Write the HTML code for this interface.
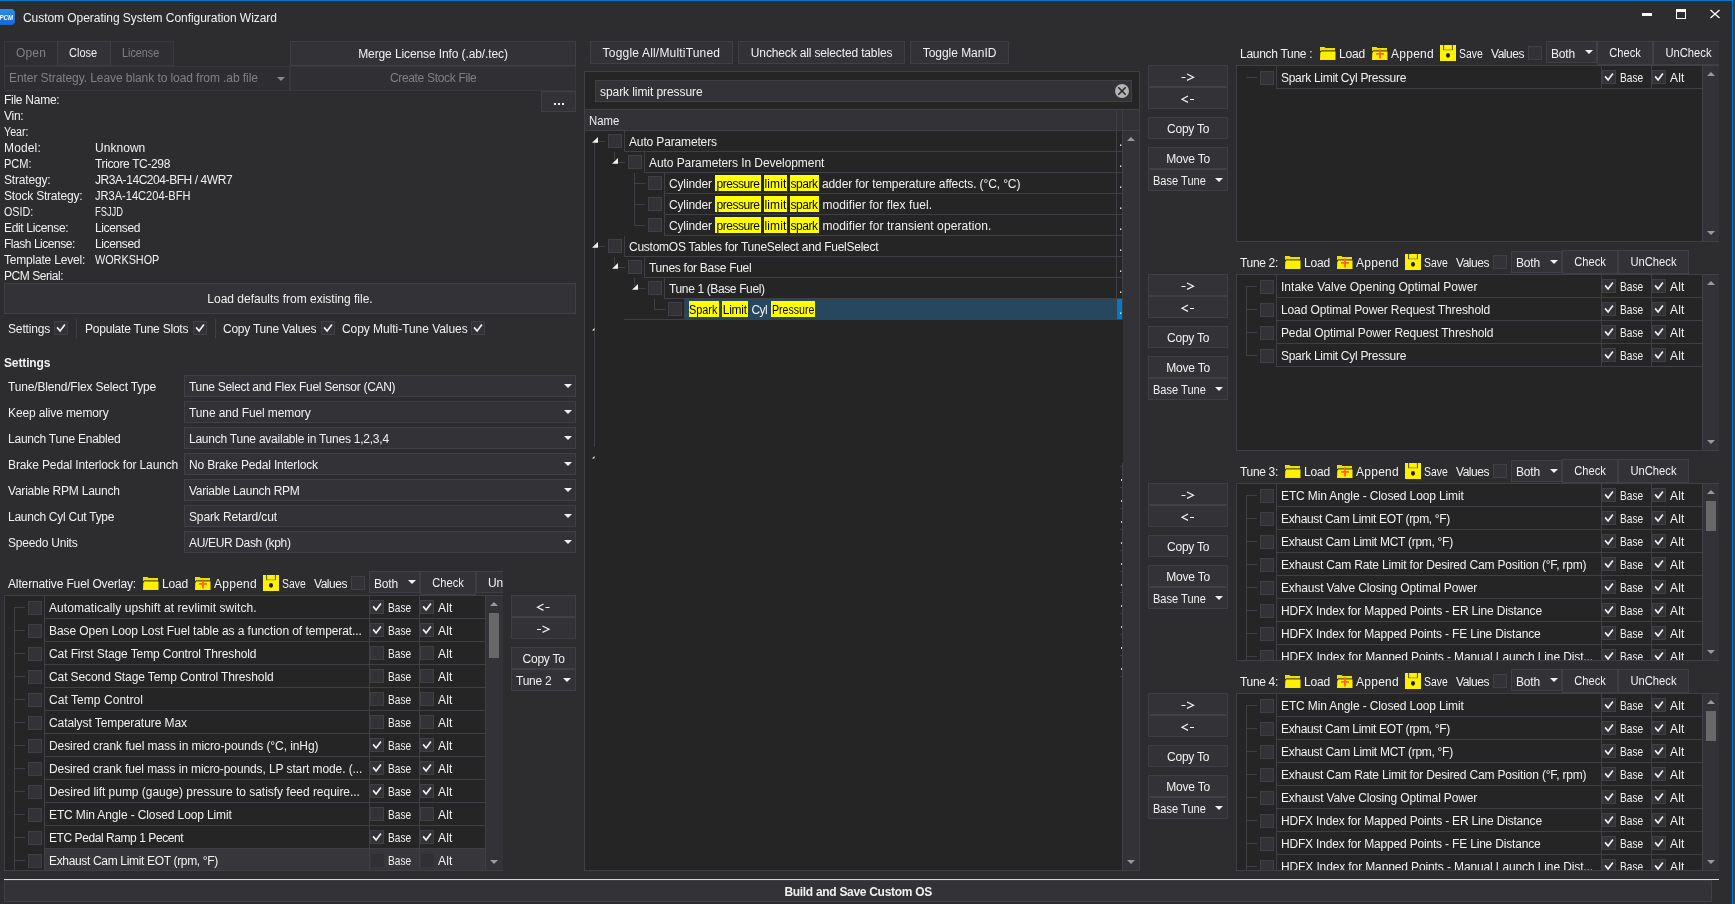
<!DOCTYPE html>
<html><head><meta charset="utf-8"><style>
html,body{margin:0;padding:0;}
body{width:1735px;height:904px;overflow:hidden;position:relative;background:#2D2D30;font-family:"Liberation Sans",sans-serif;font-size:12px;}
.a{position:absolute;}
.t{position:absolute;line-height:14px;white-space:nowrap;letter-spacing:-0.13px;}
svg{display:block;}
</style></head><body><div id="w" style="position:absolute;left:0;top:0;width:1735px;height:904px;will-change:transform">
<div class="a" style="left:0;top:0;width:1733px;height:1px;background:#007ACC"></div>
<div class="a" style="left:1732px;top:0;width:1px;height:904px;background:#007ACC"></div>
<div class="a" style="left:1733px;top:0;width:1px;height:904px;background:#433B38"></div>
<div class="a" style="left:1734px;top:0;width:1px;height:904px;background:#404042"></div>
<svg width="16" height="17" style="position:absolute;left:0;top:9px"><defs><linearGradient id="ig" x1="0" y1="0" x2="0" y2="1"><stop offset="0" stop-color="#2A8DEC"/><stop offset="1" stop-color="#1768D0"/></linearGradient></defs><path d="M-2 0H12.5L15 2.5V13.5L12.5 16H-2Z" fill="url(#ig)"/><text x="-0.5" y="11" font-family="Liberation Sans" font-weight="bold" font-style="italic" font-size="6.5" fill="#fff" textLength="13.5" lengthAdjust="spacingAndGlyphs">PCM</text></svg>
<div class="t" style="left:23px;top:11px;color:#F1F1F1;letter-spacing:-0.033px;letter-spacing:-0.05px">Custom Operating System Configuration Wizard</div>
<div class="a" style="left:1642px;top:13px;width:10px;height:3px;background:#FFFFFF;"></div>
<div class="a" style="left:1676px;top:9px;width:8px;height:6px;border:1px solid #fff;border-top-width:3px"></div>
<svg width="12" height="10" style="position:absolute;left:1709px;top:9px"><path d="M1.5 1L10.5 9M10.5 1L1.5 9" stroke="#fff" stroke-width="1.3"/></svg>
<div class="a" style="left:4px;top:41px;width:170px;height:25px;background:#2F2F33;box-shadow:inset 0 0 0 1px #38383C;"></div>
<div class="a" style="left:57px;top:41px;width:54px;height:25px;background:#333337;box-shadow:inset 0 0 0 1px #3F3F46;"></div>
<div class="t" style="left:16px;top:46px;color:#808080;letter-spacing:0.173px;">Open</div>
<div class="t" style="left:69px;top:46px;color:#F1F1F1;letter-spacing:0px;transform:scaleX(0.9192);transform-origin:0 0;">Close</div>
<div class="t" style="left:122px;top:46px;color:#808080;letter-spacing:0px;transform:scaleX(0.9019);transform-origin:0 0;">License</div>
<div class="a" style="left:4px;top:66px;width:286px;height:25px;background:#2E2E32;box-shadow:inset 0 0 0 1px #38383C;"></div>
<div class="t" style="left:9px;top:71px;color:#808080;letter-spacing:-0.077px;">Enter Strategy. Leave blank to load from .ab file</div>
<svg width="8" height="4" style="position:absolute;left:277px;top:77px"><path d="M0 0H8L4 4Z" fill="#8A8A8A"/></svg>
<div class="a" style="left:290px;top:41px;width:286px;height:25px;background:#333337;box-shadow:inset 0 0 0 1px #3F3F46;"></div>
<div class="t" style="left:290px;width:286px;text-align:center;top:47px;color:#F1F1F1;letter-spacing:-0.105px;text-indent:0.105px;">Merge License Info (.ab/.tec)</div>
<div class="a" style="left:290px;top:66px;width:286px;height:25px;background:#303034;box-shadow:inset 0 0 0 1px #38383C;"></div>
<div class="t" style="left:290px;width:286px;text-align:center;top:71px;color:#808080;letter-spacing:-0.322px;text-indent:0.322px;">Create Stock File</div>
<div class="a" style="left:541px;top:91px;width:35px;height:21px;background:#333337;box-shadow:inset 0 0 0 1px #3F3F46;"></div>
<div class="a" style="left:554px;top:103px;width:2px;height:2px;background:#F1F1F1;"></div>
<div class="a" style="left:558px;top:103px;width:2px;height:2px;background:#F1F1F1;"></div>
<div class="a" style="left:562px;top:103px;width:2px;height:2px;background:#F1F1F1;"></div>
<div class="t" style="left:4px;top:93px;color:#F1F1F1;letter-spacing:-0.264px;">File Name:</div>
<div class="t" style="left:4px;top:109px;color:#F1F1F1;letter-spacing:-0.276px;">Vin:</div>
<div class="t" style="left:4px;top:125px;color:#F1F1F1;letter-spacing:0px;transform:scaleX(0.8882);transform-origin:0 0;">Year:</div>
<div class="t" style="left:4px;top:141px;color:#F1F1F1;letter-spacing:0.143px;">Model:</div>
<div class="t" style="left:95px;top:141px;color:#F1F1F1;letter-spacing:0.041px;">Unknown</div>
<div class="t" style="left:4px;top:157px;color:#F1F1F1;letter-spacing:0px;transform:scaleX(0.9202);transform-origin:0 0;">PCM:</div>
<div class="t" style="left:95px;top:157px;color:#F1F1F1;letter-spacing:-0.359px;">Tricore TC-298</div>
<div class="t" style="left:4px;top:173px;color:#F1F1F1;letter-spacing:-0.186px;">Strategy:</div>
<div class="t" style="left:95px;top:173px;color:#F1F1F1;letter-spacing:-0.435px;">JR3A-14C204-BFH / 4WR7</div>
<div class="t" style="left:4px;top:189px;color:#F1F1F1;letter-spacing:-0.203px;">Stock Strategy:</div>
<div class="t" style="left:95px;top:189px;color:#F1F1F1;letter-spacing:0px;transform:scaleX(0.9230);transform-origin:0 0;">JR3A-14C204-BFH</div>
<div class="t" style="left:4px;top:205px;color:#F1F1F1;letter-spacing:0px;transform:scaleX(0.8968);transform-origin:0 0;">OSID:</div>
<div class="t" style="left:95px;top:205px;color:#F1F1F1;letter-spacing:0px;transform:scaleX(0.7761);transform-origin:0 0;">FSJJD</div>
<div class="t" style="left:4px;top:221px;color:#F1F1F1;letter-spacing:-0.339px;">Edit License:</div>
<div class="t" style="left:95px;top:221px;color:#F1F1F1;letter-spacing:-0.366px;">Licensed</div>
<div class="t" style="left:4px;top:237px;color:#F1F1F1;letter-spacing:-0.465px;">Flash License:</div>
<div class="t" style="left:95px;top:237px;color:#F1F1F1;letter-spacing:-0.366px;">Licensed</div>
<div class="t" style="left:4px;top:253px;color:#F1F1F1;letter-spacing:-0.201px;">Template Level:</div>
<div class="t" style="left:95px;top:253px;color:#F1F1F1;letter-spacing:0px;transform:scaleX(0.9014);transform-origin:0 0;">WORKSHOP</div>
<div class="t" style="left:4px;top:269px;color:#F1F1F1;letter-spacing:-0.438px;">PCM Serial:</div>
<div class="a" style="left:4px;top:283px;width:572px;height:31px;background:#333337;box-shadow:inset 0 0 0 1px #3F3F46;"></div>
<div class="t" style="left:4px;width:572px;text-align:center;top:292px;color:#F1F1F1;letter-spacing:-0.003px;text-indent:0.003px;">Load defaults from existing file.</div>
<div class="t" style="left:8px;top:322px;color:#F1F1F1;letter-spacing:-0.151px;">Settings</div>
<div class="a" style="left:54px;top:321px;width:14px;height:14px;background:#333337;box-shadow:inset 0 0 0 1px #3F3F46;"></div>
<svg width="14" height="14" style="position:absolute;left:54px;top:321px"><path d="M3.1 6.4L6.1 10L10.9 3.6" stroke="#F1F1F1" stroke-width="1.7" fill="none"/></svg>
<div class="a" style="left:76px;top:319px;width:1px;height:19px;background:#3F3F46;"></div>
<div class="t" style="left:85px;top:322px;color:#F1F1F1;letter-spacing:-0.218px;">Populate Tune Slots</div>
<div class="a" style="left:193px;top:321px;width:14px;height:14px;background:#333337;box-shadow:inset 0 0 0 1px #3F3F46;"></div>
<svg width="14" height="14" style="position:absolute;left:193px;top:321px"><path d="M3.1 6.4L6.1 10L10.9 3.6" stroke="#F1F1F1" stroke-width="1.7" fill="none"/></svg>
<div class="a" style="left:215px;top:319px;width:1px;height:19px;background:#3F3F46;"></div>
<div class="t" style="left:223px;top:322px;color:#F1F1F1;letter-spacing:-0.246px;">Copy Tune Values</div>
<div class="a" style="left:321px;top:321px;width:14px;height:14px;background:#333337;box-shadow:inset 0 0 0 1px #3F3F46;"></div>
<svg width="14" height="14" style="position:absolute;left:321px;top:321px"><path d="M3.1 6.4L6.1 10L10.9 3.6" stroke="#F1F1F1" stroke-width="1.7" fill="none"/></svg>
<div class="t" style="left:342px;top:322px;color:#F1F1F1;letter-spacing:-0.049px;">Copy Multi-Tune Values</div>
<div class="a" style="left:471px;top:321px;width:14px;height:14px;background:#333337;box-shadow:inset 0 0 0 1px #3F3F46;"></div>
<svg width="14" height="14" style="position:absolute;left:471px;top:321px"><path d="M3.1 6.4L6.1 10L10.9 3.6" stroke="#F1F1F1" stroke-width="1.7" fill="none"/></svg>
<div class="t" style="left:4px;top:356px;font-weight:bold;color:#F1F1F1">Settings</div>
<div class="t" style="left:8px;top:380px;color:#F1F1F1;letter-spacing:-0.173px;">Tune/Blend/Flex Select Type</div>
<div class="a" style="left:184px;top:375px;width:392px;height:22px;background:#333337;box-shadow:inset 0 0 0 1px #3F3F46;"></div>
<div class="t" style="left:189px;top:380px;color:#F1F1F1;letter-spacing:-0.299px;">Tune Select and Flex Fuel Sensor (CAN)</div>
<svg width="8" height="4" style="position:absolute;left:564px;top:384px"><path d="M0 0H8L4 4Z" fill="#F1F1F1"/></svg>
<div class="t" style="left:8px;top:406px;color:#F1F1F1;letter-spacing:-0.126px;">Keep alive memory</div>
<div class="a" style="left:184px;top:401px;width:392px;height:22px;background:#333337;box-shadow:inset 0 0 0 1px #3F3F46;"></div>
<div class="t" style="left:189px;top:406px;color:#F1F1F1;letter-spacing:-0.1px;">Tune and Fuel memory</div>
<svg width="8" height="4" style="position:absolute;left:564px;top:410px"><path d="M0 0H8L4 4Z" fill="#F1F1F1"/></svg>
<div class="t" style="left:8px;top:432px;color:#F1F1F1;letter-spacing:-0.234px;">Launch Tune Enabled</div>
<div class="a" style="left:184px;top:427px;width:392px;height:22px;background:#333337;box-shadow:inset 0 0 0 1px #3F3F46;"></div>
<div class="t" style="left:189px;top:432px;color:#F1F1F1;letter-spacing:-0.237px;">Launch Tune available in Tunes 1,2,3,4</div>
<svg width="8" height="4" style="position:absolute;left:564px;top:436px"><path d="M0 0H8L4 4Z" fill="#F1F1F1"/></svg>
<div class="t" style="left:8px;top:458px;color:#F1F1F1;letter-spacing:-0.123px;">Brake Pedal Interlock for Launch</div>
<div class="a" style="left:184px;top:453px;width:392px;height:22px;background:#333337;box-shadow:inset 0 0 0 1px #3F3F46;"></div>
<div class="t" style="left:189px;top:458px;color:#F1F1F1;letter-spacing:-0.162px;">No Brake Pedal Interlock</div>
<svg width="8" height="4" style="position:absolute;left:564px;top:462px"><path d="M0 0H8L4 4Z" fill="#F1F1F1"/></svg>
<div class="t" style="left:8px;top:484px;color:#F1F1F1;letter-spacing:-0.215px;">Variable RPM Launch</div>
<div class="a" style="left:184px;top:479px;width:392px;height:22px;background:#333337;box-shadow:inset 0 0 0 1px #3F3F46;"></div>
<div class="t" style="left:189px;top:484px;color:#F1F1F1;letter-spacing:-0.28px;">Variable Launch RPM</div>
<svg width="8" height="4" style="position:absolute;left:564px;top:488px"><path d="M0 0H8L4 4Z" fill="#F1F1F1"/></svg>
<div class="t" style="left:8px;top:510px;color:#F1F1F1;letter-spacing:-0.262px;">Launch Cyl Cut Type</div>
<div class="a" style="left:184px;top:505px;width:392px;height:22px;background:#333337;box-shadow:inset 0 0 0 1px #3F3F46;"></div>
<div class="t" style="left:189px;top:510px;color:#F1F1F1;letter-spacing:-0.134px;">Spark Retard/cut</div>
<svg width="8" height="4" style="position:absolute;left:564px;top:514px"><path d="M0 0H8L4 4Z" fill="#F1F1F1"/></svg>
<div class="t" style="left:8px;top:536px;color:#F1F1F1;letter-spacing:-0.213px;">Speedo Units</div>
<div class="a" style="left:184px;top:531px;width:392px;height:22px;background:#333337;box-shadow:inset 0 0 0 1px #3F3F46;"></div>
<div class="t" style="left:189px;top:536px;color:#F1F1F1;letter-spacing:-0.342px;">AU/EUR Dash (kph)</div>
<svg width="8" height="4" style="position:absolute;left:564px;top:540px"><path d="M0 0H8L4 4Z" fill="#F1F1F1"/></svg>
<div class="t" style="left:8px;top:577px;color:#F1F1F1;letter-spacing:-0.135px;">Alternative Fuel Overlay:</div>
<svg width="16" height="14" style="position:absolute;left:143px;top:577px"><path d="M0 0H4.5L5.5 1H15V4H0Z" fill="#F0E000"/><path d="M0.5 3H15V4.6H1.2Z" fill="#7A7418"/><path d="M1.2 4.5H15.5V13H0L0.3 6Z" fill="#FFF000"/><path d="M1 12.4H15" stroke="#E8E040" stroke-width="0.8"/></svg>
<div class="t" style="left:162px;top:577px;color:#F1F1F1;letter-spacing:-0.207px;">Load</div>
<svg width="16" height="14" style="position:absolute;left:195px;top:577px"><path d="M0 0H4.5L5.5 1H15V4H0Z" fill="#F0E000"/><path d="M0.5 3H15V4.6H1.2Z" fill="#7A7418"/><path d="M1.2 4.5H15.5V13H0L0.3 6Z" fill="#FFF000"/><path d="M1 12.4H15" stroke="#E8E040" stroke-width="0.8"/><path d="M8 2.5V11.5M4 6.9H12" stroke="#FF6420" stroke-width="1.8"/></svg>
<div class="t" style="left:214px;top:577px;color:#F1F1F1;letter-spacing:0.26px;">Append</div>
<svg width="16" height="16" style="position:absolute;left:263px;top:575px"><rect x="0" y="0" width="16" height="16" fill="#FFF200"/><path d="M3.6 0V5.2M12.4 0V5.2" stroke="#3C4020" stroke-width="0.9"/><rect x="4" y="4.2" width="8" height="1.3" fill="#B8B030"/><ellipse cx="8" cy="10.3" rx="2" ry="2.4" fill="#1E1E22"/></svg>
<div class="t" style="left:282px;top:577px;color:#F1F1F1;letter-spacing:0px;transform:scaleX(0.8671);transform-origin:0 0;">Save</div>
<div class="t" style="left:314px;top:577px;color:#F1F1F1;letter-spacing:-0.48px;">Values</div>
<div class="a" style="left:351px;top:576px;width:14px;height:14px;background:#333337;box-shadow:inset 0 0 0 1px #3F3F46;"></div>
<div class="a" style="left:369px;top:571px;width:51px;height:22px;background:#333337;box-shadow:inset 0 0 0 1px #3F3F46;"></div>
<div class="t" style="left:374px;top:577px;color:#F1F1F1;letter-spacing:-0.171px;">Both</div>
<svg width="8" height="4" style="position:absolute;left:408px;top:580px"><path d="M0 0H8L4 4Z" fill="#F1F1F1"/></svg>
<div class="a" style="left:420px;top:571px;width:56px;height:24px;background:#333337;box-shadow:inset 0 0 0 1px #3F3F46;"></div>
<div class="t" style="left:420px;width:56px;text-align:center;top:576px;color:#F1F1F1;letter-spacing:0px;text-indent:0px;transform:scaleX(0.9254);transform-origin:50% 0;">Check</div>
<div class="a" style="left:476px;top:571px;width:27px;height:24px;overflow:hidden">
<div class="a" style="left:0;top:0;width:70px;height:22px;background:#333337;box-shadow:inset 0 0 0 1px #3F3F46"></div>
<div class="t" style="left:12px;top:5px;color:#F1F1F1">UnCheck</div>
</div>
<div class="a" style="left:4px;top:595px;width:499px;height:276px;background:#252526;box-shadow:inset 0 0 0 1px #3F3F46;"></div>
<div class="a" style="left:5px;top:596px;width:480px;height:274px;overflow:hidden">
<div class="a" style="left:9px;top:11px;width:11px;height:1px;background:#3F3F46"></div>
<div class="a" style="left:23px;top:5px;width:14px;height:14px;background:#333337;box-shadow:inset 0 0 0 1px #3F3F46"></div>
<div class="a" style="left:39px;top:0px;width:1px;height:23px;background:#3F3F46"></div>
<div class="a" style="left:39px;top:22px;width:441px;height:1px;background:#3F3F46"></div>
<div class="t" style="left:44px;top:5px;color:#F1F1F1;width:317px;white-space:nowrap;overflow:hidden;letter-spacing:0.073px">Automatically upshift at revlimit switch.</div>
<div class="a" style="left:364px;top:0px;width:1px;height:23px;background:#3F3F46"></div>
<div class="a" style="left:365px;top:4px;width:14px;height:14px;background:#333337;box-shadow:inset 0 0 0 1px #3F3F46"></div>
<svg width="14" height="14" style="position:absolute;left:365px;top:4px"><path d="M3.1 6.4L6.1 10L10.9 3.6" stroke="#F1F1F1" stroke-width="1.7" fill="none"/></svg>
<div class="t" style="left:383px;top:5px;color:#F1F1F1;letter-spacing:0px;transform:scaleX(0.8454);transform-origin:0 0;">Base</div>
<div class="a" style="left:414px;top:0px;width:1px;height:23px;background:#3F3F46"></div>
<div class="a" style="left:415px;top:4px;width:14px;height:14px;background:#333337;box-shadow:inset 0 0 0 1px #3F3F46"></div>
<svg width="14" height="14" style="position:absolute;left:415px;top:4px"><path d="M3.1 6.4L6.1 10L10.9 3.6" stroke="#F1F1F1" stroke-width="1.7" fill="none"/></svg>
<div class="t" style="left:433px;top:5px;color:#F1F1F1;letter-spacing:0.165px">Alt</div>
<div class="a" style="left:9px;top:34px;width:11px;height:1px;background:#3F3F46"></div>
<div class="a" style="left:23px;top:28px;width:14px;height:14px;background:#333337;box-shadow:inset 0 0 0 1px #3F3F46"></div>
<div class="a" style="left:39px;top:23px;width:1px;height:23px;background:#3F3F46"></div>
<div class="a" style="left:39px;top:45px;width:441px;height:1px;background:#3F3F46"></div>
<div class="t" style="left:44px;top:28px;color:#F1F1F1;width:317px;white-space:nowrap;overflow:hidden;letter-spacing:-0.079px">Base Open Loop Lost Fuel table as a function of temperat...</div>
<div class="a" style="left:364px;top:23px;width:1px;height:23px;background:#3F3F46"></div>
<div class="a" style="left:365px;top:27px;width:14px;height:14px;background:#333337;box-shadow:inset 0 0 0 1px #3F3F46"></div>
<svg width="14" height="14" style="position:absolute;left:365px;top:27px"><path d="M3.1 6.4L6.1 10L10.9 3.6" stroke="#F1F1F1" stroke-width="1.7" fill="none"/></svg>
<div class="t" style="left:383px;top:28px;color:#F1F1F1;letter-spacing:0px;transform:scaleX(0.8454);transform-origin:0 0;">Base</div>
<div class="a" style="left:414px;top:23px;width:1px;height:23px;background:#3F3F46"></div>
<div class="a" style="left:415px;top:27px;width:14px;height:14px;background:#333337;box-shadow:inset 0 0 0 1px #3F3F46"></div>
<svg width="14" height="14" style="position:absolute;left:415px;top:27px"><path d="M3.1 6.4L6.1 10L10.9 3.6" stroke="#F1F1F1" stroke-width="1.7" fill="none"/></svg>
<div class="t" style="left:433px;top:28px;color:#F1F1F1;letter-spacing:0.165px">Alt</div>
<div class="a" style="left:9px;top:57px;width:11px;height:1px;background:#3F3F46"></div>
<div class="a" style="left:23px;top:51px;width:14px;height:14px;background:#333337;box-shadow:inset 0 0 0 1px #3F3F46"></div>
<div class="a" style="left:39px;top:46px;width:1px;height:23px;background:#3F3F46"></div>
<div class="a" style="left:39px;top:68px;width:441px;height:1px;background:#3F3F46"></div>
<div class="t" style="left:44px;top:51px;color:#F1F1F1;width:317px;white-space:nowrap;overflow:hidden;letter-spacing:-0.093px">Cat First Stage Temp Control Threshold</div>
<div class="a" style="left:364px;top:46px;width:1px;height:23px;background:#3F3F46"></div>
<div class="a" style="left:365px;top:50px;width:14px;height:14px;background:#333337;box-shadow:inset 0 0 0 1px #3F3F46"></div>
<div class="t" style="left:383px;top:51px;color:#F1F1F1;letter-spacing:0px;transform:scaleX(0.8454);transform-origin:0 0;">Base</div>
<div class="a" style="left:414px;top:46px;width:1px;height:23px;background:#3F3F46"></div>
<div class="a" style="left:415px;top:50px;width:14px;height:14px;background:#333337;box-shadow:inset 0 0 0 1px #3F3F46"></div>
<div class="t" style="left:433px;top:51px;color:#F1F1F1;letter-spacing:0.165px">Alt</div>
<div class="a" style="left:9px;top:80px;width:11px;height:1px;background:#3F3F46"></div>
<div class="a" style="left:23px;top:74px;width:14px;height:14px;background:#333337;box-shadow:inset 0 0 0 1px #3F3F46"></div>
<div class="a" style="left:39px;top:69px;width:1px;height:23px;background:#3F3F46"></div>
<div class="a" style="left:39px;top:91px;width:441px;height:1px;background:#3F3F46"></div>
<div class="t" style="left:44px;top:74px;color:#F1F1F1;width:317px;white-space:nowrap;overflow:hidden;letter-spacing:-0.098px">Cat Second Stage Temp Control Threshold</div>
<div class="a" style="left:364px;top:69px;width:1px;height:23px;background:#3F3F46"></div>
<div class="a" style="left:365px;top:73px;width:14px;height:14px;background:#333337;box-shadow:inset 0 0 0 1px #3F3F46"></div>
<div class="t" style="left:383px;top:74px;color:#F1F1F1;letter-spacing:0px;transform:scaleX(0.8454);transform-origin:0 0;">Base</div>
<div class="a" style="left:414px;top:69px;width:1px;height:23px;background:#3F3F46"></div>
<div class="a" style="left:415px;top:73px;width:14px;height:14px;background:#333337;box-shadow:inset 0 0 0 1px #3F3F46"></div>
<div class="t" style="left:433px;top:74px;color:#F1F1F1;letter-spacing:0.165px">Alt</div>
<div class="a" style="left:9px;top:103px;width:11px;height:1px;background:#3F3F46"></div>
<div class="a" style="left:23px;top:97px;width:14px;height:14px;background:#333337;box-shadow:inset 0 0 0 1px #3F3F46"></div>
<div class="a" style="left:39px;top:92px;width:1px;height:23px;background:#3F3F46"></div>
<div class="a" style="left:39px;top:114px;width:441px;height:1px;background:#3F3F46"></div>
<div class="t" style="left:44px;top:97px;color:#F1F1F1;width:317px;white-space:nowrap;overflow:hidden;letter-spacing:0.053px">Cat Temp Control</div>
<div class="a" style="left:364px;top:92px;width:1px;height:23px;background:#3F3F46"></div>
<div class="a" style="left:365px;top:96px;width:14px;height:14px;background:#333337;box-shadow:inset 0 0 0 1px #3F3F46"></div>
<div class="t" style="left:383px;top:97px;color:#F1F1F1;letter-spacing:0px;transform:scaleX(0.8454);transform-origin:0 0;">Base</div>
<div class="a" style="left:414px;top:92px;width:1px;height:23px;background:#3F3F46"></div>
<div class="a" style="left:415px;top:96px;width:14px;height:14px;background:#333337;box-shadow:inset 0 0 0 1px #3F3F46"></div>
<div class="t" style="left:433px;top:97px;color:#F1F1F1;letter-spacing:0.165px">Alt</div>
<div class="a" style="left:9px;top:126px;width:11px;height:1px;background:#3F3F46"></div>
<div class="a" style="left:23px;top:120px;width:14px;height:14px;background:#333337;box-shadow:inset 0 0 0 1px #3F3F46"></div>
<div class="a" style="left:39px;top:115px;width:1px;height:23px;background:#3F3F46"></div>
<div class="a" style="left:39px;top:137px;width:441px;height:1px;background:#3F3F46"></div>
<div class="t" style="left:44px;top:120px;color:#F1F1F1;width:317px;white-space:nowrap;overflow:hidden;letter-spacing:-0.08px">Catalyst Temperature Max</div>
<div class="a" style="left:364px;top:115px;width:1px;height:23px;background:#3F3F46"></div>
<div class="a" style="left:365px;top:119px;width:14px;height:14px;background:#333337;box-shadow:inset 0 0 0 1px #3F3F46"></div>
<div class="t" style="left:383px;top:120px;color:#F1F1F1;letter-spacing:0px;transform:scaleX(0.8454);transform-origin:0 0;">Base</div>
<div class="a" style="left:414px;top:115px;width:1px;height:23px;background:#3F3F46"></div>
<div class="a" style="left:415px;top:119px;width:14px;height:14px;background:#333337;box-shadow:inset 0 0 0 1px #3F3F46"></div>
<div class="t" style="left:433px;top:120px;color:#F1F1F1;letter-spacing:0.165px">Alt</div>
<div class="a" style="left:9px;top:149px;width:11px;height:1px;background:#3F3F46"></div>
<div class="a" style="left:23px;top:143px;width:14px;height:14px;background:#333337;box-shadow:inset 0 0 0 1px #3F3F46"></div>
<div class="a" style="left:39px;top:138px;width:1px;height:23px;background:#3F3F46"></div>
<div class="a" style="left:39px;top:160px;width:441px;height:1px;background:#3F3F46"></div>
<div class="t" style="left:44px;top:143px;color:#F1F1F1;width:317px;white-space:nowrap;overflow:hidden;letter-spacing:-0.083px">Desired crank fuel mass in micro-pounds (°C, inHg)</div>
<div class="a" style="left:364px;top:138px;width:1px;height:23px;background:#3F3F46"></div>
<div class="a" style="left:365px;top:142px;width:14px;height:14px;background:#333337;box-shadow:inset 0 0 0 1px #3F3F46"></div>
<svg width="14" height="14" style="position:absolute;left:365px;top:142px"><path d="M3.1 6.4L6.1 10L10.9 3.6" stroke="#F1F1F1" stroke-width="1.7" fill="none"/></svg>
<div class="t" style="left:383px;top:143px;color:#F1F1F1;letter-spacing:0px;transform:scaleX(0.8454);transform-origin:0 0;">Base</div>
<div class="a" style="left:414px;top:138px;width:1px;height:23px;background:#3F3F46"></div>
<div class="a" style="left:415px;top:142px;width:14px;height:14px;background:#333337;box-shadow:inset 0 0 0 1px #3F3F46"></div>
<svg width="14" height="14" style="position:absolute;left:415px;top:142px"><path d="M3.1 6.4L6.1 10L10.9 3.6" stroke="#F1F1F1" stroke-width="1.7" fill="none"/></svg>
<div class="t" style="left:433px;top:143px;color:#F1F1F1;letter-spacing:0.165px">Alt</div>
<div class="a" style="left:9px;top:172px;width:11px;height:1px;background:#3F3F46"></div>
<div class="a" style="left:23px;top:166px;width:14px;height:14px;background:#333337;box-shadow:inset 0 0 0 1px #3F3F46"></div>
<div class="a" style="left:39px;top:161px;width:1px;height:23px;background:#3F3F46"></div>
<div class="a" style="left:39px;top:183px;width:441px;height:1px;background:#3F3F46"></div>
<div class="t" style="left:44px;top:166px;color:#F1F1F1;width:317px;white-space:nowrap;overflow:hidden;letter-spacing:-0.1px">Desired crank fuel mass in micro-pounds, LP start mode. (...</div>
<div class="a" style="left:364px;top:161px;width:1px;height:23px;background:#3F3F46"></div>
<div class="a" style="left:365px;top:165px;width:14px;height:14px;background:#333337;box-shadow:inset 0 0 0 1px #3F3F46"></div>
<svg width="14" height="14" style="position:absolute;left:365px;top:165px"><path d="M3.1 6.4L6.1 10L10.9 3.6" stroke="#F1F1F1" stroke-width="1.7" fill="none"/></svg>
<div class="t" style="left:383px;top:166px;color:#F1F1F1;letter-spacing:0px;transform:scaleX(0.8454);transform-origin:0 0;">Base</div>
<div class="a" style="left:414px;top:161px;width:1px;height:23px;background:#3F3F46"></div>
<div class="a" style="left:415px;top:165px;width:14px;height:14px;background:#333337;box-shadow:inset 0 0 0 1px #3F3F46"></div>
<svg width="14" height="14" style="position:absolute;left:415px;top:165px"><path d="M3.1 6.4L6.1 10L10.9 3.6" stroke="#F1F1F1" stroke-width="1.7" fill="none"/></svg>
<div class="t" style="left:433px;top:166px;color:#F1F1F1;letter-spacing:0.165px">Alt</div>
<div class="a" style="left:9px;top:195px;width:11px;height:1px;background:#3F3F46"></div>
<div class="a" style="left:23px;top:189px;width:14px;height:14px;background:#333337;box-shadow:inset 0 0 0 1px #3F3F46"></div>
<div class="a" style="left:39px;top:184px;width:1px;height:23px;background:#3F3F46"></div>
<div class="a" style="left:39px;top:206px;width:441px;height:1px;background:#3F3F46"></div>
<div class="t" style="left:44px;top:189px;color:#F1F1F1;width:317px;white-space:nowrap;overflow:hidden;letter-spacing:-0.031px">Desired lift pump (gauge) pressure to satisfy feed require...</div>
<div class="a" style="left:364px;top:184px;width:1px;height:23px;background:#3F3F46"></div>
<div class="a" style="left:365px;top:188px;width:14px;height:14px;background:#333337;box-shadow:inset 0 0 0 1px #3F3F46"></div>
<svg width="14" height="14" style="position:absolute;left:365px;top:188px"><path d="M3.1 6.4L6.1 10L10.9 3.6" stroke="#F1F1F1" stroke-width="1.7" fill="none"/></svg>
<div class="t" style="left:383px;top:189px;color:#F1F1F1;letter-spacing:0px;transform:scaleX(0.8454);transform-origin:0 0;">Base</div>
<div class="a" style="left:414px;top:184px;width:1px;height:23px;background:#3F3F46"></div>
<div class="a" style="left:415px;top:188px;width:14px;height:14px;background:#333337;box-shadow:inset 0 0 0 1px #3F3F46"></div>
<svg width="14" height="14" style="position:absolute;left:415px;top:188px"><path d="M3.1 6.4L6.1 10L10.9 3.6" stroke="#F1F1F1" stroke-width="1.7" fill="none"/></svg>
<div class="t" style="left:433px;top:189px;color:#F1F1F1;letter-spacing:0.165px">Alt</div>
<div class="a" style="left:9px;top:218px;width:11px;height:1px;background:#3F3F46"></div>
<div class="a" style="left:23px;top:212px;width:14px;height:14px;background:#333337;box-shadow:inset 0 0 0 1px #3F3F46"></div>
<div class="a" style="left:39px;top:207px;width:1px;height:23px;background:#3F3F46"></div>
<div class="a" style="left:39px;top:229px;width:441px;height:1px;background:#3F3F46"></div>
<div class="t" style="left:44px;top:212px;color:#F1F1F1;width:317px;white-space:nowrap;overflow:hidden;letter-spacing:-0.121px">ETC Min Angle - Closed Loop Limit</div>
<div class="a" style="left:364px;top:207px;width:1px;height:23px;background:#3F3F46"></div>
<div class="a" style="left:365px;top:211px;width:14px;height:14px;background:#333337;box-shadow:inset 0 0 0 1px #3F3F46"></div>
<div class="t" style="left:383px;top:212px;color:#F1F1F1;letter-spacing:0px;transform:scaleX(0.8454);transform-origin:0 0;">Base</div>
<div class="a" style="left:414px;top:207px;width:1px;height:23px;background:#3F3F46"></div>
<div class="a" style="left:415px;top:211px;width:14px;height:14px;background:#333337;box-shadow:inset 0 0 0 1px #3F3F46"></div>
<div class="t" style="left:433px;top:212px;color:#F1F1F1;letter-spacing:0.165px">Alt</div>
<div class="a" style="left:9px;top:241px;width:11px;height:1px;background:#3F3F46"></div>
<div class="a" style="left:23px;top:235px;width:14px;height:14px;background:#333337;box-shadow:inset 0 0 0 1px #3F3F46"></div>
<div class="a" style="left:39px;top:230px;width:1px;height:23px;background:#3F3F46"></div>
<div class="a" style="left:39px;top:252px;width:441px;height:1px;background:#3F3F46"></div>
<div class="t" style="left:44px;top:235px;color:#F1F1F1;width:317px;white-space:nowrap;overflow:hidden;letter-spacing:-0.433px">ETC Pedal Ramp 1 Pecent</div>
<div class="a" style="left:364px;top:230px;width:1px;height:23px;background:#3F3F46"></div>
<div class="a" style="left:365px;top:234px;width:14px;height:14px;background:#333337;box-shadow:inset 0 0 0 1px #3F3F46"></div>
<svg width="14" height="14" style="position:absolute;left:365px;top:234px"><path d="M3.1 6.4L6.1 10L10.9 3.6" stroke="#F1F1F1" stroke-width="1.7" fill="none"/></svg>
<div class="t" style="left:383px;top:235px;color:#F1F1F1;letter-spacing:0px;transform:scaleX(0.8454);transform-origin:0 0;">Base</div>
<div class="a" style="left:414px;top:230px;width:1px;height:23px;background:#3F3F46"></div>
<div class="a" style="left:415px;top:234px;width:14px;height:14px;background:#333337;box-shadow:inset 0 0 0 1px #3F3F46"></div>
<svg width="14" height="14" style="position:absolute;left:415px;top:234px"><path d="M3.1 6.4L6.1 10L10.9 3.6" stroke="#F1F1F1" stroke-width="1.7" fill="none"/></svg>
<div class="t" style="left:433px;top:235px;color:#F1F1F1;letter-spacing:0.165px">Alt</div>
<div class="a" style="left:39px;top:253px;width:441px;height:22px;background:#37373B"></div>
<div class="a" style="left:9px;top:264px;width:11px;height:1px;background:#3F3F46"></div>
<div class="a" style="left:23px;top:258px;width:14px;height:14px;background:#333337;box-shadow:inset 0 0 0 1px #3F3F46"></div>
<div class="a" style="left:39px;top:253px;width:1px;height:23px;background:#3F3F46"></div>
<div class="a" style="left:39px;top:275px;width:441px;height:1px;background:#3F3F46"></div>
<div class="t" style="left:44px;top:258px;color:#F1F1F1;width:317px;white-space:nowrap;overflow:hidden;letter-spacing:-0.333px">Exhaust Cam Limit EOT (rpm, °F)</div>
<div class="a" style="left:364px;top:253px;width:1px;height:23px;background:#3F3F46"></div>
<div class="a" style="left:366px;top:258px;width:13px;height:13px;background:#313135"></div>
<div class="t" style="left:383px;top:258px;color:#F1F1F1;letter-spacing:0px;transform:scaleX(0.8454);transform-origin:0 0;">Base</div>
<div class="a" style="left:414px;top:253px;width:1px;height:23px;background:#3F3F46"></div>
<div class="a" style="left:416px;top:258px;width:13px;height:13px;background:#313135"></div>
<div class="t" style="left:433px;top:258px;color:#F1F1F1;letter-spacing:0.165px">Alt</div>
<div class="a" style="left:9px;top:11px;width:1px;height:263px;background:#3F3F46"></div>
</div>
<div class="a" style="left:486px;top:596px;width:17px;height:274px;background:#333337;"></div>
<div class="a" style="left:485px;top:596px;width:1px;height:274px;background:#3F3F46;"></div>
<svg width="8" height="4" style="position:absolute;left:490px;top:602px"><path d="M0 4H8L4 0Z" fill="#9A9A9A"/></svg>
<svg width="8" height="4" style="position:absolute;left:490px;top:860px"><path d="M0 0H8L4 4Z" fill="#9A9A9A"/></svg>
<div class="a" style="left:489px;top:613px;width:10px;height:45px;background:#686868;"></div>
<div class="a" style="left:511px;top:595px;width:65px;height:22px;background:#333337;box-shadow:inset 0 0 0 1px #3F3F46;"></div>
<svg width="20" height="16" style="position:absolute;left:533px;top:599px"><path d="M10.5 5L4.5 8.200000000000045L10.5 11.399999999999977M12.5 8.5H16.5" stroke="#F1F1F1" stroke-width="1.2" fill="none"/></svg>
<div class="a" style="left:511px;top:617px;width:65px;height:22px;background:#333337;box-shadow:inset 0 0 0 1px #3F3F46;"></div>
<svg width="20" height="16" style="position:absolute;left:533px;top:621px"><path d="M4.0 8.5H8.0M9.5 5L16.0 8.200000000000045L9.5 11.399999999999977" stroke="#F1F1F1" stroke-width="1.2" fill="none"/></svg>
<div class="a" style="left:511px;top:647px;width:65px;height:22px;background:#333337;box-shadow:inset 0 0 0 1px #3F3F46;"></div>
<div class="t" style="left:511px;width:65px;text-align:center;top:652px;color:#F1F1F1;letter-spacing:-0.241px;text-indent:0.241px;">Copy To</div>
<div class="a" style="left:511px;top:669px;width:65px;height:22px;background:#333337;box-shadow:inset 0 0 0 1px #3F3F46;"></div>
<div class="t" style="left:516px;top:674px;color:#F1F1F1;letter-spacing:-0.228px;">Tune 2</div>
<svg width="8" height="4" style="position:absolute;left:563px;top:678px"><path d="M0 0H8L4 4Z" fill="#F1F1F1"/></svg>
<div class="a" style="left:590px;top:41px;width:143px;height:23px;background:#333337;box-shadow:inset 0 0 0 1px #3F3F46;"></div>
<div class="t" style="left:590px;width:143px;text-align:center;top:46px;color:#F1F1F1;letter-spacing:0.19px;text-indent:-0.19px;">Toggle All/MultiTuned</div>
<div class="a" style="left:738px;top:41px;width:167px;height:23px;background:#333337;box-shadow:inset 0 0 0 1px #3F3F46;"></div>
<div class="t" style="left:738px;width:167px;text-align:center;top:46px;color:#F1F1F1;letter-spacing:-0.147px;text-indent:0.147px;">Uncheck all selected tables</div>
<div class="a" style="left:910px;top:41px;width:99px;height:23px;background:#333337;box-shadow:inset 0 0 0 1px #3F3F46;"></div>
<div class="t" style="left:910px;width:99px;text-align:center;top:46px;color:#F1F1F1;letter-spacing:-0.034px;text-indent:0.034px;">Toggle ManID</div>
<div class="a" style="left:584px;top:71px;width:556px;height:800px;background:#252526;box-shadow:inset 0 0 0 1px #3F3F46;"></div>
<div class="a" style="left:595px;top:80px;width:537px;height:22px;background:#333337;box-shadow:inset 0 0 0 1px #3F3F46;"></div>
<div class="t" style="left:600px;top:85px;color:#F1F1F1;letter-spacing:-0.071px;">spark limit pressure</div>
<svg width="16" height="16" style="position:absolute;left:1114px;top:83px"><circle cx="8" cy="8" r="7" fill="#B4B4B4"/><path d="M4.3 4.3L11.7 11.7M11.7 4.3L4.3 11.7" stroke="#252526" stroke-width="1.5"/></svg>
<div class="a" style="left:584px;top:109px;width:556px;height:22px;background:#333337;box-shadow:inset 0 0 0 1px #3F3F46;"></div>
<div class="t" style="left:589px;top:114px;color:#F1F1F1;letter-spacing:0px;transform:scaleX(0.9463);transform-origin:0 0;">Name</div>
<div class="a" style="left:1116px;top:110px;width:1px;height:21px;background:#3F3F46;"></div>
<div class="a" style="left:1122px;top:110px;width:1px;height:21px;background:#3F3F46;"></div>
<div class="a" style="left:594px;top:143px;width:1px;height:304px;background:#3F3F46;"></div>
<div class="a" style="left:614px;top:152px;width:1px;height:8px;background:#3F3F46;"></div>
<div class="a" style="left:634px;top:173px;width:1px;height:32px;background:#3F3F46;"></div>
<div class="a" style="left:634px;top:183px;width:11px;height:1px;background:#3F3F46;"></div>
<div class="a" style="left:634px;top:204px;width:11px;height:1px;background:#3F3F46;"></div>
<div class="a" style="left:634px;top:225px;width:11px;height:1px;background:#3F3F46;"></div>
<div class="a" style="left:634px;top:204px;width:1px;height:22px;background:#3F3F46;"></div>
<div class="a" style="left:614px;top:257px;width:1px;height:8px;background:#3F3F46;"></div>
<div class="a" style="left:634px;top:278px;width:1px;height:8px;background:#3F3F46;"></div>
<div class="a" style="left:654px;top:299px;width:1px;height:11px;background:#3F3F46;"></div>
<div class="a" style="left:654px;top:309px;width:12px;height:1px;background:#3F3F46;"></div>
<div class="a" style="left:624px;top:319px;width:498px;height:1px;background:#3F3F46;"></div>
<svg width="3" height="3" style="position:absolute;left:592px;top:328px"><path d="M0 2.5H2.5V0Z" fill="#F1F1F1"/></svg>
<svg width="3" height="3" style="position:absolute;left:592px;top:456px"><path d="M0 2.5H2.5V0Z" fill="#F1F1F1"/></svg>
<div class="a" style="left:624px;top:131px;width:1px;height:21px;background:#3F3F46;"></div>
<div class="a" style="left:624px;top:151px;width:498px;height:1px;background:#3F3F46;"></div>
<div class="a" style="left:1116px;top:131px;width:1px;height:21px;background:#3F3F46;"></div>
<div class="a" style="left:608px;top:134px;width:14px;height:14px;background:#333337;box-shadow:inset 0 0 0 1px #3F3F46;"></div>
<svg width="6" height="6" style="position:absolute;left:592px;top:137px"><path d="M0 5.8H6V0Z" fill="#F1F1F1"/></svg>
<div class="a" style="left:598px;top:141px;width:7px;height:1px;background:#3F3F46;"></div>
<div class="t" style="left:629px;top:135px;color:#F1F1F1;letter-spacing:-0.146px;">Auto Parameters</div>
<div class="t" style="left:1119px;top:135px;color:#F1F1F1">.</div>
<div class="a" style="left:644px;top:152px;width:1px;height:21px;background:#3F3F46;"></div>
<div class="a" style="left:644px;top:172px;width:478px;height:1px;background:#3F3F46;"></div>
<div class="a" style="left:1116px;top:152px;width:1px;height:21px;background:#3F3F46;"></div>
<div class="a" style="left:628px;top:155px;width:14px;height:14px;background:#333337;box-shadow:inset 0 0 0 1px #3F3F46;"></div>
<svg width="6" height="6" style="position:absolute;left:612px;top:158px"><path d="M0 5.8H6V0Z" fill="#F1F1F1"/></svg>
<div class="a" style="left:618px;top:162px;width:7px;height:1px;background:#3F3F46;"></div>
<div class="t" style="left:649px;top:156px;color:#F1F1F1;letter-spacing:-0.072px;">Auto Parameters In Development</div>
<div class="t" style="left:1119px;top:156px;color:#F1F1F1">.</div>
<div class="a" style="left:664px;top:173px;width:1px;height:21px;background:#3F3F46;"></div>
<div class="a" style="left:664px;top:193px;width:458px;height:1px;background:#3F3F46;"></div>
<div class="a" style="left:1116px;top:173px;width:1px;height:21px;background:#3F3F46;"></div>
<div class="a" style="left:648px;top:176px;width:14px;height:14px;background:#333337;box-shadow:inset 0 0 0 1px #3F3F46;"></div>
<div class="t" style="left:669px;top:177px;color:#F1F1F1;letter-spacing:-0.146px;">Cylinder</div>
<div class="a" style="left:715px;top:175px;width:46px;height:16px;background:#FFFF00;"></div>
<div class="t" style="left:716.6px;top:177px;color:#000000;letter-spacing:-0.473px;">pressure</div>
<div class="a" style="left:764px;top:175px;width:23px;height:16px;background:#FFFF00;"></div>
<div class="t" style="left:764.5px;top:177px;color:#000000;letter-spacing:0.126px;">limit</div>
<div class="a" style="left:790px;top:175px;width:29px;height:16px;background:#FFFF00;"></div>
<div class="t" style="left:790.5px;top:177px;color:#000000;letter-spacing:-0.461px;">spark</div>
<div class="t" style="left:822px;top:177px;color:#F1F1F1;letter-spacing:-0.116px;">adder for temperature affects. (°C, °C)</div>
<div class="t" style="left:1119px;top:177px;color:#F1F1F1">.</div>
<div class="a" style="left:664px;top:194px;width:1px;height:21px;background:#3F3F46;"></div>
<div class="a" style="left:664px;top:214px;width:458px;height:1px;background:#3F3F46;"></div>
<div class="a" style="left:1116px;top:194px;width:1px;height:21px;background:#3F3F46;"></div>
<div class="a" style="left:648px;top:197px;width:14px;height:14px;background:#333337;box-shadow:inset 0 0 0 1px #3F3F46;"></div>
<div class="t" style="left:669px;top:198px;color:#F1F1F1;letter-spacing:-0.146px;">Cylinder</div>
<div class="a" style="left:715px;top:196px;width:46px;height:16px;background:#FFFF00;"></div>
<div class="t" style="left:716.6px;top:198px;color:#000000;letter-spacing:-0.473px;">pressure</div>
<div class="a" style="left:764px;top:196px;width:23px;height:16px;background:#FFFF00;"></div>
<div class="t" style="left:764.5px;top:198px;color:#000000;letter-spacing:0.126px;">limit</div>
<div class="a" style="left:790px;top:196px;width:29px;height:16px;background:#FFFF00;"></div>
<div class="t" style="left:790.5px;top:198px;color:#000000;letter-spacing:-0.461px;">spark</div>
<div class="t" style="left:822.5px;top:198px;color:#F1F1F1;letter-spacing:0.068px;">modifier for flex fuel.</div>
<div class="t" style="left:1119px;top:198px;color:#F1F1F1">.</div>
<div class="a" style="left:664px;top:215px;width:1px;height:21px;background:#3F3F46;"></div>
<div class="a" style="left:664px;top:235px;width:458px;height:1px;background:#3F3F46;"></div>
<div class="a" style="left:1116px;top:215px;width:1px;height:21px;background:#3F3F46;"></div>
<div class="a" style="left:648px;top:218px;width:14px;height:14px;background:#333337;box-shadow:inset 0 0 0 1px #3F3F46;"></div>
<div class="t" style="left:669px;top:219px;color:#F1F1F1;letter-spacing:-0.146px;">Cylinder</div>
<div class="a" style="left:715px;top:217px;width:46px;height:16px;background:#FFFF00;"></div>
<div class="t" style="left:716.6px;top:219px;color:#000000;letter-spacing:-0.473px;">pressure</div>
<div class="a" style="left:764px;top:217px;width:23px;height:16px;background:#FFFF00;"></div>
<div class="t" style="left:764.5px;top:219px;color:#000000;letter-spacing:0.126px;">limit</div>
<div class="a" style="left:790px;top:217px;width:29px;height:16px;background:#FFFF00;"></div>
<div class="t" style="left:790.5px;top:219px;color:#000000;letter-spacing:-0.461px;">spark</div>
<div class="t" style="left:822.5px;top:219px;color:#F1F1F1;letter-spacing:0.083px;">modifier for transient operation.</div>
<div class="t" style="left:1119px;top:219px;color:#F1F1F1">.</div>
<div class="a" style="left:624px;top:236px;width:1px;height:21px;background:#3F3F46;"></div>
<div class="a" style="left:624px;top:256px;width:498px;height:1px;background:#3F3F46;"></div>
<div class="a" style="left:1116px;top:236px;width:1px;height:21px;background:#3F3F46;"></div>
<div class="a" style="left:608px;top:239px;width:14px;height:14px;background:#333337;box-shadow:inset 0 0 0 1px #3F3F46;"></div>
<svg width="6" height="6" style="position:absolute;left:592px;top:242px"><path d="M0 5.8H6V0Z" fill="#F1F1F1"/></svg>
<div class="a" style="left:598px;top:246px;width:7px;height:1px;background:#3F3F46;"></div>
<div class="t" style="left:629px;top:240px;color:#F1F1F1;letter-spacing:-0.25px;">CustomOS Tables for TuneSelect and FuelSelect</div>
<div class="t" style="left:1119px;top:240px;color:#F1F1F1">.</div>
<div class="a" style="left:644px;top:257px;width:1px;height:21px;background:#3F3F46;"></div>
<div class="a" style="left:644px;top:277px;width:478px;height:1px;background:#3F3F46;"></div>
<div class="a" style="left:1116px;top:257px;width:1px;height:21px;background:#3F3F46;"></div>
<div class="a" style="left:628px;top:260px;width:14px;height:14px;background:#333337;box-shadow:inset 0 0 0 1px #3F3F46;"></div>
<svg width="6" height="6" style="position:absolute;left:612px;top:263px"><path d="M0 5.8H6V0Z" fill="#F1F1F1"/></svg>
<div class="a" style="left:618px;top:267px;width:7px;height:1px;background:#3F3F46;"></div>
<div class="t" style="left:649px;top:261px;color:#F1F1F1;letter-spacing:-0.275px;">Tunes for Base Fuel</div>
<div class="t" style="left:1119px;top:261px;color:#F1F1F1">.</div>
<div class="a" style="left:664px;top:278px;width:1px;height:21px;background:#3F3F46;"></div>
<div class="a" style="left:664px;top:298px;width:458px;height:1px;background:#3F3F46;"></div>
<div class="a" style="left:1116px;top:278px;width:1px;height:21px;background:#3F3F46;"></div>
<div class="a" style="left:648px;top:281px;width:14px;height:14px;background:#333337;box-shadow:inset 0 0 0 1px #3F3F46;"></div>
<svg width="6" height="6" style="position:absolute;left:632px;top:284px"><path d="M0 5.8H6V0Z" fill="#F1F1F1"/></svg>
<div class="a" style="left:638px;top:288px;width:7px;height:1px;background:#3F3F46;"></div>
<div class="t" style="left:669px;top:282px;color:#F1F1F1;letter-spacing:-0.369px;">Tune 1 (Base Fuel)</div>
<div class="t" style="left:1119px;top:282px;color:#F1F1F1">.</div>
<div class="a" style="left:685px;top:299px;width:431px;height:20px;background:#26475E;"></div>
<div class="a" style="left:1117px;top:299px;width:5px;height:20px;background:#007ACC;"></div>
<div class="a" style="left:684px;top:299px;width:1px;height:21px;background:#3F3F46;"></div>
<div class="a" style="left:684px;top:319px;width:438px;height:1px;background:#3F3F46;"></div>
<div class="a" style="left:1116px;top:299px;width:1px;height:21px;background:#3F3F46;"></div>
<div class="a" style="left:668px;top:302px;width:14px;height:14px;background:#333337;box-shadow:inset 0 0 0 1px #3F3F46;"></div>
<div class="a" style="left:689px;top:301px;width:30px;height:16px;background:#FFFF00;"></div>
<div class="t" style="left:689.2px;top:303px;color:#000000;letter-spacing:0px;transform:scaleX(0.9058);transform-origin:0 0;">Spark</div>
<div class="a" style="left:722px;top:301px;width:26px;height:16px;background:#FFFF00;"></div>
<div class="t" style="left:722.7px;top:303px;color:#000000;letter-spacing:-0.225px;">Limit</div>
<div class="t" style="left:751.4px;top:303px;color:#F1F1F1;letter-spacing:-0.483px;">Cyl</div>
<div class="a" style="left:771px;top:301px;width:44px;height:16px;background:#FFFF00;"></div>
<div class="t" style="left:771.6px;top:303px;color:#000000;letter-spacing:0px;transform:scaleX(0.8833);transform-origin:0 0;">Pressure</div>
<div class="t" style="left:1119px;top:303px;color:#F1F1F1">.</div>
<div class="a" style="left:1123px;top:131px;width:16px;height:739px;background:#333337;"></div>
<div class="a" style="left:1122px;top:131px;width:1px;height:189px;background:#3F3F46;"></div>
<div class="a" style="left:1122px;top:463px;width:1px;height:407px;background:#3F3F46;"></div>
<div class="a" style="left:1120px;top:466px;width:2px;height:1px;background:#3F3F46;"></div>
<div class="a" style="left:1120px;top:487px;width:2px;height:1px;background:#3F3F46;"></div>
<div class="a" style="left:1120px;top:508px;width:2px;height:1px;background:#3F3F46;"></div>
<div class="a" style="left:1120px;top:529px;width:2px;height:1px;background:#3F3F46;"></div>
<div class="a" style="left:1120px;top:550px;width:2px;height:1px;background:#3F3F46;"></div>
<div class="a" style="left:1120px;top:571px;width:2px;height:1px;background:#3F3F46;"></div>
<div class="a" style="left:1120px;top:592px;width:2px;height:1px;background:#3F3F46;"></div>
<div class="a" style="left:1120px;top:613px;width:2px;height:1px;background:#3F3F46;"></div>
<div class="a" style="left:1120px;top:634px;width:2px;height:1px;background:#3F3F46;"></div>
<div class="a" style="left:1120px;top:655px;width:2px;height:1px;background:#3F3F46;"></div>
<div class="a" style="left:1120px;top:676px;width:2px;height:1px;background:#3F3F46;"></div>
<div class="a" style="left:1121px;top:479px;width:1px;height:2px;background:#D0D0D0;"></div>
<div class="a" style="left:1121px;top:500px;width:1px;height:2px;background:#D0D0D0;"></div>
<div class="a" style="left:1121px;top:521px;width:1px;height:2px;background:#D0D0D0;"></div>
<div class="a" style="left:1121px;top:542px;width:1px;height:2px;background:#D0D0D0;"></div>
<div class="a" style="left:1121px;top:563px;width:1px;height:2px;background:#D0D0D0;"></div>
<div class="a" style="left:1121px;top:584px;width:1px;height:2px;background:#D0D0D0;"></div>
<div class="a" style="left:1121px;top:605px;width:1px;height:2px;background:#D0D0D0;"></div>
<div class="a" style="left:1121px;top:626px;width:1px;height:2px;background:#D0D0D0;"></div>
<div class="a" style="left:1121px;top:647px;width:1px;height:2px;background:#D0D0D0;"></div>
<div class="a" style="left:1121px;top:668px;width:1px;height:2px;background:#D0D0D0;"></div>
<svg width="8" height="4" style="position:absolute;left:1127px;top:137px"><path d="M0 4H8L4 0Z" fill="#9A9A9A"/></svg>
<svg width="8" height="4" style="position:absolute;left:1127px;top:860px"><path d="M0 0H8L4 4Z" fill="#9A9A9A"/></svg>
<div class="a" style="left:1148px;top:65px;width:80px;height:22px;background:#333337;box-shadow:inset 0 0 0 1px #3F3F46;"></div>
<svg width="20" height="16" style="position:absolute;left:1178px;top:69px"><path d="M3.5 8.5H7.5M9.0 5L15.5 8.200000000000003L9.0 11.400000000000006" stroke="#F1F1F1" stroke-width="1.2" fill="none"/></svg>
<div class="a" style="left:1148px;top:87px;width:80px;height:22px;background:#333337;box-shadow:inset 0 0 0 1px #3F3F46;"></div>
<svg width="20" height="16" style="position:absolute;left:1178px;top:91px"><path d="M10.0 5L4.0 8.200000000000003L10.0 11.400000000000006M12.0 8.5H16.0" stroke="#F1F1F1" stroke-width="1.2" fill="none"/></svg>
<div class="a" style="left:1148px;top:117px;width:80px;height:22px;background:#333337;box-shadow:inset 0 0 0 1px #3F3F46;"></div>
<div class="t" style="left:1148px;width:80px;text-align:center;top:122px;color:#F1F1F1;letter-spacing:-0.241px;text-indent:0.241px;">Copy To</div>
<div class="a" style="left:1148px;top:147px;width:80px;height:22px;background:#333337;box-shadow:inset 0 0 0 1px #3F3F46;"></div>
<div class="t" style="left:1148px;width:80px;text-align:center;top:152px;color:#F1F1F1;letter-spacing:-0.18px;text-indent:0.18px;">Move To</div>
<div class="a" style="left:1148px;top:169px;width:80px;height:22px;background:#333337;box-shadow:inset 0 0 0 1px #3F3F46;"></div>
<div class="t" style="left:1153px;top:174px;color:#F1F1F1;letter-spacing:0px;transform:scaleX(0.9203);transform-origin:0 0;">Base Tune</div>
<svg width="8" height="4" style="position:absolute;left:1215px;top:178px"><path d="M0 0H8L4 4Z" fill="#F1F1F1"/></svg>
<div class="t" style="left:1240px;top:47px;color:#F1F1F1;letter-spacing:-0.287px;">Launch Tune :</div>
<svg width="16" height="14" style="position:absolute;left:1320px;top:47px"><path d="M0 0H4.5L5.5 1H15V4H0Z" fill="#F0E000"/><path d="M0.5 3H15V4.6H1.2Z" fill="#7A7418"/><path d="M1.2 4.5H15.5V13H0L0.3 6Z" fill="#FFF000"/><path d="M1 12.4H15" stroke="#E8E040" stroke-width="0.8"/></svg>
<div class="t" style="left:1339px;top:47px;color:#F1F1F1;letter-spacing:-0.207px;">Load</div>
<svg width="16" height="14" style="position:absolute;left:1372px;top:47px"><path d="M0 0H4.5L5.5 1H15V4H0Z" fill="#F0E000"/><path d="M0.5 3H15V4.6H1.2Z" fill="#7A7418"/><path d="M1.2 4.5H15.5V13H0L0.3 6Z" fill="#FFF000"/><path d="M1 12.4H15" stroke="#E8E040" stroke-width="0.8"/><path d="M8 2.5V11.5M4 6.9H12" stroke="#FF6420" stroke-width="1.8"/></svg>
<div class="t" style="left:1391px;top:47px;color:#F1F1F1;letter-spacing:0.26px;">Append</div>
<svg width="16" height="16" style="position:absolute;left:1440px;top:45px"><rect x="0" y="0" width="16" height="16" fill="#FFF200"/><path d="M3.6 0V5.2M12.4 0V5.2" stroke="#3C4020" stroke-width="0.9"/><rect x="4" y="4.2" width="8" height="1.3" fill="#B8B030"/><ellipse cx="8" cy="10.3" rx="2" ry="2.4" fill="#1E1E22"/></svg>
<div class="t" style="left:1459px;top:47px;color:#F1F1F1;letter-spacing:0px;transform:scaleX(0.8671);transform-origin:0 0;">Save</div>
<div class="t" style="left:1491px;top:47px;color:#F1F1F1;letter-spacing:-0.48px;">Values</div>
<div class="a" style="left:1528px;top:46px;width:14px;height:14px;background:#333337;box-shadow:inset 0 0 0 1px #3F3F46;"></div>
<div class="a" style="left:1546px;top:41px;width:51px;height:22px;background:#333337;box-shadow:inset 0 0 0 1px #3F3F46;"></div>
<div class="t" style="left:1551px;top:47px;color:#F1F1F1;letter-spacing:-0.171px;">Both</div>
<svg width="8" height="4" style="position:absolute;left:1585px;top:50px"><path d="M0 0H8L4 4Z" fill="#F1F1F1"/></svg>
<div class="a" style="left:1597px;top:41px;width:56px;height:24px;background:#333337;box-shadow:inset 0 0 0 1px #3F3F46;"></div>
<div class="t" style="left:1597px;width:56px;text-align:center;top:46px;color:#F1F1F1;letter-spacing:0px;text-indent:0px;transform:scaleX(0.9254);transform-origin:50% 0;">Check</div>
<div class="a" style="left:1653px;top:41px;width:71px;height:24px;background:#333337;box-shadow:inset 0 0 0 1px #3F3F46;"></div>
<div class="t" style="left:1653px;width:71px;text-align:center;top:46px;color:#F1F1F1;letter-spacing:0px;text-indent:0px;transform:scaleX(0.9314);transform-origin:50% 0;">UnCheck</div>
<div class="a" style="left:1719px;top:40px;width:13px;height:26px;background:#2D2D30;"></div>
<div class="a" style="left:1236px;top:65px;width:483px;height:177px;background:#252526;box-shadow:inset 0 0 0 1px #3F3F46;"></div>
<div class="a" style="left:1237px;top:66px;width:465px;height:175px;overflow:hidden">
<div class="a" style="left:9px;top:11px;width:11px;height:1px;background:#3F3F46"></div>
<div class="a" style="left:23px;top:5px;width:14px;height:14px;background:#333337;box-shadow:inset 0 0 0 1px #3F3F46"></div>
<div class="a" style="left:39px;top:0px;width:1px;height:23px;background:#3F3F46"></div>
<div class="a" style="left:39px;top:22px;width:426px;height:1px;background:#3F3F46"></div>
<div class="t" style="left:44px;top:5px;color:#F1F1F1;width:317px;white-space:nowrap;overflow:hidden;letter-spacing:-0.29px">Spark Limit Cyl Pressure</div>
<div class="a" style="left:364px;top:0px;width:1px;height:23px;background:#3F3F46"></div>
<div class="a" style="left:365px;top:4px;width:14px;height:14px;background:#333337;box-shadow:inset 0 0 0 1px #3F3F46"></div>
<svg width="14" height="14" style="position:absolute;left:365px;top:4px"><path d="M3.1 6.4L6.1 10L10.9 3.6" stroke="#F1F1F1" stroke-width="1.7" fill="none"/></svg>
<div class="t" style="left:383px;top:5px;color:#F1F1F1;letter-spacing:0px;transform:scaleX(0.8454);transform-origin:0 0;">Base</div>
<div class="a" style="left:414px;top:0px;width:1px;height:23px;background:#3F3F46"></div>
<div class="a" style="left:415px;top:4px;width:14px;height:14px;background:#333337;box-shadow:inset 0 0 0 1px #3F3F46"></div>
<svg width="14" height="14" style="position:absolute;left:415px;top:4px"><path d="M3.1 6.4L6.1 10L10.9 3.6" stroke="#F1F1F1" stroke-width="1.7" fill="none"/></svg>
<div class="t" style="left:433px;top:5px;color:#F1F1F1;letter-spacing:0.165px">Alt</div>
</div>
<div class="a" style="left:1703px;top:66px;width:16px;height:175px;background:#333337;"></div>
<div class="a" style="left:1702px;top:66px;width:1px;height:175px;background:#3F3F46;"></div>
<svg width="8" height="4" style="position:absolute;left:1707px;top:72px"><path d="M0 4H8L4 0Z" fill="#9A9A9A"/></svg>
<svg width="8" height="4" style="position:absolute;left:1707px;top:231px"><path d="M0 0H8L4 4Z" fill="#9A9A9A"/></svg>
<div class="a" style="left:1148px;top:274px;width:80px;height:22px;background:#333337;box-shadow:inset 0 0 0 1px #3F3F46;"></div>
<svg width="20" height="16" style="position:absolute;left:1178px;top:278px"><path d="M3.5 8.5H7.5M9.0 5L15.5 8.199999999999989L9.0 11.399999999999977" stroke="#F1F1F1" stroke-width="1.2" fill="none"/></svg>
<div class="a" style="left:1148px;top:296px;width:80px;height:22px;background:#333337;box-shadow:inset 0 0 0 1px #3F3F46;"></div>
<svg width="20" height="16" style="position:absolute;left:1178px;top:300px"><path d="M10.0 5L4.0 8.199999999999989L10.0 11.399999999999977M12.0 8.5H16.0" stroke="#F1F1F1" stroke-width="1.2" fill="none"/></svg>
<div class="a" style="left:1148px;top:326px;width:80px;height:22px;background:#333337;box-shadow:inset 0 0 0 1px #3F3F46;"></div>
<div class="t" style="left:1148px;width:80px;text-align:center;top:331px;color:#F1F1F1;letter-spacing:-0.241px;text-indent:0.241px;">Copy To</div>
<div class="a" style="left:1148px;top:356px;width:80px;height:22px;background:#333337;box-shadow:inset 0 0 0 1px #3F3F46;"></div>
<div class="t" style="left:1148px;width:80px;text-align:center;top:361px;color:#F1F1F1;letter-spacing:-0.18px;text-indent:0.18px;">Move To</div>
<div class="a" style="left:1148px;top:378px;width:80px;height:22px;background:#333337;box-shadow:inset 0 0 0 1px #3F3F46;"></div>
<div class="t" style="left:1153px;top:383px;color:#F1F1F1;letter-spacing:0px;transform:scaleX(0.9203);transform-origin:0 0;">Base Tune</div>
<svg width="8" height="4" style="position:absolute;left:1215px;top:387px"><path d="M0 0H8L4 4Z" fill="#F1F1F1"/></svg>
<div class="t" style="left:1240px;top:256px;color:#F1F1F1;letter-spacing:-0.336px;">Tune 2:</div>
<svg width="16" height="14" style="position:absolute;left:1285px;top:256px"><path d="M0 0H4.5L5.5 1H15V4H0Z" fill="#F0E000"/><path d="M0.5 3H15V4.6H1.2Z" fill="#7A7418"/><path d="M1.2 4.5H15.5V13H0L0.3 6Z" fill="#FFF000"/><path d="M1 12.4H15" stroke="#E8E040" stroke-width="0.8"/></svg>
<div class="t" style="left:1304px;top:256px;color:#F1F1F1;letter-spacing:-0.207px;">Load</div>
<svg width="16" height="14" style="position:absolute;left:1337px;top:256px"><path d="M0 0H4.5L5.5 1H15V4H0Z" fill="#F0E000"/><path d="M0.5 3H15V4.6H1.2Z" fill="#7A7418"/><path d="M1.2 4.5H15.5V13H0L0.3 6Z" fill="#FFF000"/><path d="M1 12.4H15" stroke="#E8E040" stroke-width="0.8"/><path d="M8 2.5V11.5M4 6.9H12" stroke="#FF6420" stroke-width="1.8"/></svg>
<div class="t" style="left:1356px;top:256px;color:#F1F1F1;letter-spacing:0.26px;">Append</div>
<svg width="16" height="16" style="position:absolute;left:1405px;top:254px"><rect x="0" y="0" width="16" height="16" fill="#FFF200"/><path d="M3.6 0V5.2M12.4 0V5.2" stroke="#3C4020" stroke-width="0.9"/><rect x="4" y="4.2" width="8" height="1.3" fill="#B8B030"/><ellipse cx="8" cy="10.3" rx="2" ry="2.4" fill="#1E1E22"/></svg>
<div class="t" style="left:1424px;top:256px;color:#F1F1F1;letter-spacing:0px;transform:scaleX(0.8671);transform-origin:0 0;">Save</div>
<div class="t" style="left:1456px;top:256px;color:#F1F1F1;letter-spacing:-0.48px;">Values</div>
<div class="a" style="left:1493px;top:255px;width:14px;height:14px;background:#333337;box-shadow:inset 0 0 0 1px #3F3F46;"></div>
<div class="a" style="left:1511px;top:251px;width:51px;height:22px;background:#333337;box-shadow:inset 0 0 0 1px #3F3F46;"></div>
<div class="t" style="left:1516px;top:256px;color:#F1F1F1;letter-spacing:-0.171px;">Both</div>
<svg width="8" height="4" style="position:absolute;left:1550px;top:260px"><path d="M0 0H8L4 4Z" fill="#F1F1F1"/></svg>
<div class="a" style="left:1562px;top:250px;width:56px;height:24px;background:#333337;box-shadow:inset 0 0 0 1px #3F3F46;"></div>
<div class="t" style="left:1562px;width:56px;text-align:center;top:255px;color:#F1F1F1;letter-spacing:0px;text-indent:0px;transform:scaleX(0.9254);transform-origin:50% 0;">Check</div>
<div class="a" style="left:1618px;top:250px;width:71px;height:24px;background:#333337;box-shadow:inset 0 0 0 1px #3F3F46;"></div>
<div class="t" style="left:1618px;width:71px;text-align:center;top:255px;color:#F1F1F1;letter-spacing:0px;text-indent:0px;transform:scaleX(0.9314);transform-origin:50% 0;">UnCheck</div>
<div class="a" style="left:1236px;top:274px;width:483px;height:177px;background:#252526;box-shadow:inset 0 0 0 1px #3F3F46;"></div>
<div class="a" style="left:1237px;top:275px;width:465px;height:175px;overflow:hidden">
<div class="a" style="left:9px;top:11px;width:11px;height:1px;background:#3F3F46"></div>
<div class="a" style="left:23px;top:5px;width:14px;height:14px;background:#333337;box-shadow:inset 0 0 0 1px #3F3F46"></div>
<div class="a" style="left:39px;top:0px;width:1px;height:23px;background:#3F3F46"></div>
<div class="a" style="left:39px;top:22px;width:426px;height:1px;background:#3F3F46"></div>
<div class="t" style="left:44px;top:5px;color:#F1F1F1;width:317px;white-space:nowrap;overflow:hidden;letter-spacing:0.016px">Intake Valve Opening Optimal Power</div>
<div class="a" style="left:364px;top:0px;width:1px;height:23px;background:#3F3F46"></div>
<div class="a" style="left:365px;top:4px;width:14px;height:14px;background:#333337;box-shadow:inset 0 0 0 1px #3F3F46"></div>
<svg width="14" height="14" style="position:absolute;left:365px;top:4px"><path d="M3.1 6.4L6.1 10L10.9 3.6" stroke="#F1F1F1" stroke-width="1.7" fill="none"/></svg>
<div class="t" style="left:383px;top:5px;color:#F1F1F1;letter-spacing:0px;transform:scaleX(0.8454);transform-origin:0 0;">Base</div>
<div class="a" style="left:414px;top:0px;width:1px;height:23px;background:#3F3F46"></div>
<div class="a" style="left:415px;top:4px;width:14px;height:14px;background:#333337;box-shadow:inset 0 0 0 1px #3F3F46"></div>
<svg width="14" height="14" style="position:absolute;left:415px;top:4px"><path d="M3.1 6.4L6.1 10L10.9 3.6" stroke="#F1F1F1" stroke-width="1.7" fill="none"/></svg>
<div class="t" style="left:433px;top:5px;color:#F1F1F1;letter-spacing:0.165px">Alt</div>
<div class="a" style="left:9px;top:34px;width:11px;height:1px;background:#3F3F46"></div>
<div class="a" style="left:23px;top:28px;width:14px;height:14px;background:#333337;box-shadow:inset 0 0 0 1px #3F3F46"></div>
<div class="a" style="left:39px;top:23px;width:1px;height:23px;background:#3F3F46"></div>
<div class="a" style="left:39px;top:45px;width:426px;height:1px;background:#3F3F46"></div>
<div class="t" style="left:44px;top:28px;color:#F1F1F1;width:317px;white-space:nowrap;overflow:hidden;letter-spacing:-0.116px">Load Optimal Power Request Threshold</div>
<div class="a" style="left:364px;top:23px;width:1px;height:23px;background:#3F3F46"></div>
<div class="a" style="left:365px;top:27px;width:14px;height:14px;background:#333337;box-shadow:inset 0 0 0 1px #3F3F46"></div>
<svg width="14" height="14" style="position:absolute;left:365px;top:27px"><path d="M3.1 6.4L6.1 10L10.9 3.6" stroke="#F1F1F1" stroke-width="1.7" fill="none"/></svg>
<div class="t" style="left:383px;top:28px;color:#F1F1F1;letter-spacing:0px;transform:scaleX(0.8454);transform-origin:0 0;">Base</div>
<div class="a" style="left:414px;top:23px;width:1px;height:23px;background:#3F3F46"></div>
<div class="a" style="left:415px;top:27px;width:14px;height:14px;background:#333337;box-shadow:inset 0 0 0 1px #3F3F46"></div>
<svg width="14" height="14" style="position:absolute;left:415px;top:27px"><path d="M3.1 6.4L6.1 10L10.9 3.6" stroke="#F1F1F1" stroke-width="1.7" fill="none"/></svg>
<div class="t" style="left:433px;top:28px;color:#F1F1F1;letter-spacing:0.165px">Alt</div>
<div class="a" style="left:9px;top:57px;width:11px;height:1px;background:#3F3F46"></div>
<div class="a" style="left:23px;top:51px;width:14px;height:14px;background:#333337;box-shadow:inset 0 0 0 1px #3F3F46"></div>
<div class="a" style="left:39px;top:46px;width:1px;height:23px;background:#3F3F46"></div>
<div class="a" style="left:39px;top:68px;width:426px;height:1px;background:#3F3F46"></div>
<div class="t" style="left:44px;top:51px;color:#F1F1F1;width:317px;white-space:nowrap;overflow:hidden;letter-spacing:-0.132px">Pedal Optimal Power Request Threshold</div>
<div class="a" style="left:364px;top:46px;width:1px;height:23px;background:#3F3F46"></div>
<div class="a" style="left:365px;top:50px;width:14px;height:14px;background:#333337;box-shadow:inset 0 0 0 1px #3F3F46"></div>
<svg width="14" height="14" style="position:absolute;left:365px;top:50px"><path d="M3.1 6.4L6.1 10L10.9 3.6" stroke="#F1F1F1" stroke-width="1.7" fill="none"/></svg>
<div class="t" style="left:383px;top:51px;color:#F1F1F1;letter-spacing:0px;transform:scaleX(0.8454);transform-origin:0 0;">Base</div>
<div class="a" style="left:414px;top:46px;width:1px;height:23px;background:#3F3F46"></div>
<div class="a" style="left:415px;top:50px;width:14px;height:14px;background:#333337;box-shadow:inset 0 0 0 1px #3F3F46"></div>
<svg width="14" height="14" style="position:absolute;left:415px;top:50px"><path d="M3.1 6.4L6.1 10L10.9 3.6" stroke="#F1F1F1" stroke-width="1.7" fill="none"/></svg>
<div class="t" style="left:433px;top:51px;color:#F1F1F1;letter-spacing:0.165px">Alt</div>
<div class="a" style="left:9px;top:80px;width:11px;height:1px;background:#3F3F46"></div>
<div class="a" style="left:23px;top:74px;width:14px;height:14px;background:#333337;box-shadow:inset 0 0 0 1px #3F3F46"></div>
<div class="a" style="left:39px;top:69px;width:1px;height:23px;background:#3F3F46"></div>
<div class="a" style="left:39px;top:91px;width:426px;height:1px;background:#3F3F46"></div>
<div class="t" style="left:44px;top:74px;color:#F1F1F1;width:317px;white-space:nowrap;overflow:hidden;letter-spacing:-0.29px">Spark Limit Cyl Pressure</div>
<div class="a" style="left:364px;top:69px;width:1px;height:23px;background:#3F3F46"></div>
<div class="a" style="left:365px;top:73px;width:14px;height:14px;background:#333337;box-shadow:inset 0 0 0 1px #3F3F46"></div>
<svg width="14" height="14" style="position:absolute;left:365px;top:73px"><path d="M3.1 6.4L6.1 10L10.9 3.6" stroke="#F1F1F1" stroke-width="1.7" fill="none"/></svg>
<div class="t" style="left:383px;top:74px;color:#F1F1F1;letter-spacing:0px;transform:scaleX(0.8454);transform-origin:0 0;">Base</div>
<div class="a" style="left:414px;top:69px;width:1px;height:23px;background:#3F3F46"></div>
<div class="a" style="left:415px;top:73px;width:14px;height:14px;background:#333337;box-shadow:inset 0 0 0 1px #3F3F46"></div>
<svg width="14" height="14" style="position:absolute;left:415px;top:73px"><path d="M3.1 6.4L6.1 10L10.9 3.6" stroke="#F1F1F1" stroke-width="1.7" fill="none"/></svg>
<div class="t" style="left:433px;top:74px;color:#F1F1F1;letter-spacing:0.165px">Alt</div>
<div class="a" style="left:9px;top:11px;width:1px;height:70px;background:#3F3F46"></div>
</div>
<div class="a" style="left:1703px;top:275px;width:16px;height:175px;background:#333337;"></div>
<div class="a" style="left:1702px;top:275px;width:1px;height:175px;background:#3F3F46;"></div>
<svg width="8" height="4" style="position:absolute;left:1707px;top:281px"><path d="M0 4H8L4 0Z" fill="#9A9A9A"/></svg>
<svg width="8" height="4" style="position:absolute;left:1707px;top:440px"><path d="M0 0H8L4 4Z" fill="#9A9A9A"/></svg>
<div class="a" style="left:1148px;top:483px;width:80px;height:22px;background:#333337;box-shadow:inset 0 0 0 1px #3F3F46;"></div>
<svg width="20" height="16" style="position:absolute;left:1178px;top:487px"><path d="M3.5 8.5H7.5M9.0 5L15.5 8.199999999999989L9.0 11.399999999999977" stroke="#F1F1F1" stroke-width="1.2" fill="none"/></svg>
<div class="a" style="left:1148px;top:505px;width:80px;height:22px;background:#333337;box-shadow:inset 0 0 0 1px #3F3F46;"></div>
<svg width="20" height="16" style="position:absolute;left:1178px;top:509px"><path d="M10.0 5L4.0 8.200000000000045L10.0 11.399999999999977M12.0 8.5H16.0" stroke="#F1F1F1" stroke-width="1.2" fill="none"/></svg>
<div class="a" style="left:1148px;top:535px;width:80px;height:22px;background:#333337;box-shadow:inset 0 0 0 1px #3F3F46;"></div>
<div class="t" style="left:1148px;width:80px;text-align:center;top:540px;color:#F1F1F1;letter-spacing:-0.241px;text-indent:0.241px;">Copy To</div>
<div class="a" style="left:1148px;top:565px;width:80px;height:22px;background:#333337;box-shadow:inset 0 0 0 1px #3F3F46;"></div>
<div class="t" style="left:1148px;width:80px;text-align:center;top:570px;color:#F1F1F1;letter-spacing:-0.18px;text-indent:0.18px;">Move To</div>
<div class="a" style="left:1148px;top:587px;width:80px;height:22px;background:#333337;box-shadow:inset 0 0 0 1px #3F3F46;"></div>
<div class="t" style="left:1153px;top:592px;color:#F1F1F1;letter-spacing:0px;transform:scaleX(0.9203);transform-origin:0 0;">Base Tune</div>
<svg width="8" height="4" style="position:absolute;left:1215px;top:596px"><path d="M0 0H8L4 4Z" fill="#F1F1F1"/></svg>
<div class="t" style="left:1240px;top:465px;color:#F1F1F1;letter-spacing:-0.336px;">Tune 3:</div>
<svg width="16" height="14" style="position:absolute;left:1285px;top:465px"><path d="M0 0H4.5L5.5 1H15V4H0Z" fill="#F0E000"/><path d="M0.5 3H15V4.6H1.2Z" fill="#7A7418"/><path d="M1.2 4.5H15.5V13H0L0.3 6Z" fill="#FFF000"/><path d="M1 12.4H15" stroke="#E8E040" stroke-width="0.8"/></svg>
<div class="t" style="left:1304px;top:465px;color:#F1F1F1;letter-spacing:-0.207px;">Load</div>
<svg width="16" height="14" style="position:absolute;left:1337px;top:465px"><path d="M0 0H4.5L5.5 1H15V4H0Z" fill="#F0E000"/><path d="M0.5 3H15V4.6H1.2Z" fill="#7A7418"/><path d="M1.2 4.5H15.5V13H0L0.3 6Z" fill="#FFF000"/><path d="M1 12.4H15" stroke="#E8E040" stroke-width="0.8"/><path d="M8 2.5V11.5M4 6.9H12" stroke="#FF6420" stroke-width="1.8"/></svg>
<div class="t" style="left:1356px;top:465px;color:#F1F1F1;letter-spacing:0.26px;">Append</div>
<svg width="16" height="16" style="position:absolute;left:1405px;top:463px"><rect x="0" y="0" width="16" height="16" fill="#FFF200"/><path d="M3.6 0V5.2M12.4 0V5.2" stroke="#3C4020" stroke-width="0.9"/><rect x="4" y="4.2" width="8" height="1.3" fill="#B8B030"/><ellipse cx="8" cy="10.3" rx="2" ry="2.4" fill="#1E1E22"/></svg>
<div class="t" style="left:1424px;top:465px;color:#F1F1F1;letter-spacing:0px;transform:scaleX(0.8671);transform-origin:0 0;">Save</div>
<div class="t" style="left:1456px;top:465px;color:#F1F1F1;letter-spacing:-0.48px;">Values</div>
<div class="a" style="left:1493px;top:464px;width:14px;height:14px;background:#333337;box-shadow:inset 0 0 0 1px #3F3F46;"></div>
<div class="a" style="left:1511px;top:460px;width:51px;height:22px;background:#333337;box-shadow:inset 0 0 0 1px #3F3F46;"></div>
<div class="t" style="left:1516px;top:465px;color:#F1F1F1;letter-spacing:-0.171px;">Both</div>
<svg width="8" height="4" style="position:absolute;left:1550px;top:469px"><path d="M0 0H8L4 4Z" fill="#F1F1F1"/></svg>
<div class="a" style="left:1562px;top:459px;width:56px;height:24px;background:#333337;box-shadow:inset 0 0 0 1px #3F3F46;"></div>
<div class="t" style="left:1562px;width:56px;text-align:center;top:464px;color:#F1F1F1;letter-spacing:0px;text-indent:0px;transform:scaleX(0.9254);transform-origin:50% 0;">Check</div>
<div class="a" style="left:1618px;top:459px;width:71px;height:24px;background:#333337;box-shadow:inset 0 0 0 1px #3F3F46;"></div>
<div class="t" style="left:1618px;width:71px;text-align:center;top:464px;color:#F1F1F1;letter-spacing:0px;text-indent:0px;transform:scaleX(0.9314);transform-origin:50% 0;">UnCheck</div>
<div class="a" style="left:1236px;top:483px;width:483px;height:178px;background:#252526;box-shadow:inset 0 0 0 1px #3F3F46;"></div>
<div class="a" style="left:1237px;top:484px;width:465px;height:176px;overflow:hidden">
<div class="a" style="left:9px;top:11px;width:11px;height:1px;background:#3F3F46"></div>
<div class="a" style="left:23px;top:5px;width:14px;height:14px;background:#333337;box-shadow:inset 0 0 0 1px #3F3F46"></div>
<div class="a" style="left:39px;top:0px;width:1px;height:23px;background:#3F3F46"></div>
<div class="a" style="left:39px;top:22px;width:426px;height:1px;background:#3F3F46"></div>
<div class="t" style="left:44px;top:5px;color:#F1F1F1;width:317px;white-space:nowrap;overflow:hidden;letter-spacing:-0.121px">ETC Min Angle - Closed Loop Limit</div>
<div class="a" style="left:364px;top:0px;width:1px;height:23px;background:#3F3F46"></div>
<div class="a" style="left:365px;top:4px;width:14px;height:14px;background:#333337;box-shadow:inset 0 0 0 1px #3F3F46"></div>
<svg width="14" height="14" style="position:absolute;left:365px;top:4px"><path d="M3.1 6.4L6.1 10L10.9 3.6" stroke="#F1F1F1" stroke-width="1.7" fill="none"/></svg>
<div class="t" style="left:383px;top:5px;color:#F1F1F1;letter-spacing:0px;transform:scaleX(0.8454);transform-origin:0 0;">Base</div>
<div class="a" style="left:414px;top:0px;width:1px;height:23px;background:#3F3F46"></div>
<div class="a" style="left:415px;top:4px;width:14px;height:14px;background:#333337;box-shadow:inset 0 0 0 1px #3F3F46"></div>
<svg width="14" height="14" style="position:absolute;left:415px;top:4px"><path d="M3.1 6.4L6.1 10L10.9 3.6" stroke="#F1F1F1" stroke-width="1.7" fill="none"/></svg>
<div class="t" style="left:433px;top:5px;color:#F1F1F1;letter-spacing:0.165px">Alt</div>
<div class="a" style="left:9px;top:34px;width:11px;height:1px;background:#3F3F46"></div>
<div class="a" style="left:23px;top:28px;width:14px;height:14px;background:#333337;box-shadow:inset 0 0 0 1px #3F3F46"></div>
<div class="a" style="left:39px;top:23px;width:1px;height:23px;background:#3F3F46"></div>
<div class="a" style="left:39px;top:45px;width:426px;height:1px;background:#3F3F46"></div>
<div class="t" style="left:44px;top:28px;color:#F1F1F1;width:317px;white-space:nowrap;overflow:hidden;letter-spacing:-0.333px">Exhaust Cam Limit EOT (rpm, °F)</div>
<div class="a" style="left:364px;top:23px;width:1px;height:23px;background:#3F3F46"></div>
<div class="a" style="left:365px;top:27px;width:14px;height:14px;background:#333337;box-shadow:inset 0 0 0 1px #3F3F46"></div>
<svg width="14" height="14" style="position:absolute;left:365px;top:27px"><path d="M3.1 6.4L6.1 10L10.9 3.6" stroke="#F1F1F1" stroke-width="1.7" fill="none"/></svg>
<div class="t" style="left:383px;top:28px;color:#F1F1F1;letter-spacing:0px;transform:scaleX(0.8454);transform-origin:0 0;">Base</div>
<div class="a" style="left:414px;top:23px;width:1px;height:23px;background:#3F3F46"></div>
<div class="a" style="left:415px;top:27px;width:14px;height:14px;background:#333337;box-shadow:inset 0 0 0 1px #3F3F46"></div>
<svg width="14" height="14" style="position:absolute;left:415px;top:27px"><path d="M3.1 6.4L6.1 10L10.9 3.6" stroke="#F1F1F1" stroke-width="1.7" fill="none"/></svg>
<div class="t" style="left:433px;top:28px;color:#F1F1F1;letter-spacing:0.165px">Alt</div>
<div class="a" style="left:9px;top:57px;width:11px;height:1px;background:#3F3F46"></div>
<div class="a" style="left:23px;top:51px;width:14px;height:14px;background:#333337;box-shadow:inset 0 0 0 1px #3F3F46"></div>
<div class="a" style="left:39px;top:46px;width:1px;height:23px;background:#3F3F46"></div>
<div class="a" style="left:39px;top:68px;width:426px;height:1px;background:#3F3F46"></div>
<div class="t" style="left:44px;top:51px;color:#F1F1F1;width:317px;white-space:nowrap;overflow:hidden;letter-spacing:-0.281px">Exhaust Cam Limit MCT (rpm, °F)</div>
<div class="a" style="left:364px;top:46px;width:1px;height:23px;background:#3F3F46"></div>
<div class="a" style="left:365px;top:50px;width:14px;height:14px;background:#333337;box-shadow:inset 0 0 0 1px #3F3F46"></div>
<svg width="14" height="14" style="position:absolute;left:365px;top:50px"><path d="M3.1 6.4L6.1 10L10.9 3.6" stroke="#F1F1F1" stroke-width="1.7" fill="none"/></svg>
<div class="t" style="left:383px;top:51px;color:#F1F1F1;letter-spacing:0px;transform:scaleX(0.8454);transform-origin:0 0;">Base</div>
<div class="a" style="left:414px;top:46px;width:1px;height:23px;background:#3F3F46"></div>
<div class="a" style="left:415px;top:50px;width:14px;height:14px;background:#333337;box-shadow:inset 0 0 0 1px #3F3F46"></div>
<svg width="14" height="14" style="position:absolute;left:415px;top:50px"><path d="M3.1 6.4L6.1 10L10.9 3.6" stroke="#F1F1F1" stroke-width="1.7" fill="none"/></svg>
<div class="t" style="left:433px;top:51px;color:#F1F1F1;letter-spacing:0.165px">Alt</div>
<div class="a" style="left:9px;top:80px;width:11px;height:1px;background:#3F3F46"></div>
<div class="a" style="left:23px;top:74px;width:14px;height:14px;background:#333337;box-shadow:inset 0 0 0 1px #3F3F46"></div>
<div class="a" style="left:39px;top:69px;width:1px;height:23px;background:#3F3F46"></div>
<div class="a" style="left:39px;top:91px;width:426px;height:1px;background:#3F3F46"></div>
<div class="t" style="left:44px;top:74px;color:#F1F1F1;width:317px;white-space:nowrap;overflow:hidden;letter-spacing:-0.178px">Exhaust Cam Rate Limit for Desired Cam Position (°F, rpm)</div>
<div class="a" style="left:364px;top:69px;width:1px;height:23px;background:#3F3F46"></div>
<div class="a" style="left:365px;top:73px;width:14px;height:14px;background:#333337;box-shadow:inset 0 0 0 1px #3F3F46"></div>
<svg width="14" height="14" style="position:absolute;left:365px;top:73px"><path d="M3.1 6.4L6.1 10L10.9 3.6" stroke="#F1F1F1" stroke-width="1.7" fill="none"/></svg>
<div class="t" style="left:383px;top:74px;color:#F1F1F1;letter-spacing:0px;transform:scaleX(0.8454);transform-origin:0 0;">Base</div>
<div class="a" style="left:414px;top:69px;width:1px;height:23px;background:#3F3F46"></div>
<div class="a" style="left:415px;top:73px;width:14px;height:14px;background:#333337;box-shadow:inset 0 0 0 1px #3F3F46"></div>
<svg width="14" height="14" style="position:absolute;left:415px;top:73px"><path d="M3.1 6.4L6.1 10L10.9 3.6" stroke="#F1F1F1" stroke-width="1.7" fill="none"/></svg>
<div class="t" style="left:433px;top:74px;color:#F1F1F1;letter-spacing:0.165px">Alt</div>
<div class="a" style="left:9px;top:103px;width:11px;height:1px;background:#3F3F46"></div>
<div class="a" style="left:23px;top:97px;width:14px;height:14px;background:#333337;box-shadow:inset 0 0 0 1px #3F3F46"></div>
<div class="a" style="left:39px;top:92px;width:1px;height:23px;background:#3F3F46"></div>
<div class="a" style="left:39px;top:114px;width:426px;height:1px;background:#3F3F46"></div>
<div class="t" style="left:44px;top:97px;color:#F1F1F1;width:317px;white-space:nowrap;overflow:hidden;letter-spacing:-0.144px">Exhaust Valve Closing Optimal Power</div>
<div class="a" style="left:364px;top:92px;width:1px;height:23px;background:#3F3F46"></div>
<div class="a" style="left:365px;top:96px;width:14px;height:14px;background:#333337;box-shadow:inset 0 0 0 1px #3F3F46"></div>
<svg width="14" height="14" style="position:absolute;left:365px;top:96px"><path d="M3.1 6.4L6.1 10L10.9 3.6" stroke="#F1F1F1" stroke-width="1.7" fill="none"/></svg>
<div class="t" style="left:383px;top:97px;color:#F1F1F1;letter-spacing:0px;transform:scaleX(0.8454);transform-origin:0 0;">Base</div>
<div class="a" style="left:414px;top:92px;width:1px;height:23px;background:#3F3F46"></div>
<div class="a" style="left:415px;top:96px;width:14px;height:14px;background:#333337;box-shadow:inset 0 0 0 1px #3F3F46"></div>
<svg width="14" height="14" style="position:absolute;left:415px;top:96px"><path d="M3.1 6.4L6.1 10L10.9 3.6" stroke="#F1F1F1" stroke-width="1.7" fill="none"/></svg>
<div class="t" style="left:433px;top:97px;color:#F1F1F1;letter-spacing:0.165px">Alt</div>
<div class="a" style="left:9px;top:126px;width:11px;height:1px;background:#3F3F46"></div>
<div class="a" style="left:23px;top:120px;width:14px;height:14px;background:#333337;box-shadow:inset 0 0 0 1px #3F3F46"></div>
<div class="a" style="left:39px;top:115px;width:1px;height:23px;background:#3F3F46"></div>
<div class="a" style="left:39px;top:137px;width:426px;height:1px;background:#3F3F46"></div>
<div class="t" style="left:44px;top:120px;color:#F1F1F1;width:317px;white-space:nowrap;overflow:hidden;letter-spacing:-0.182px">HDFX Index for Mapped Points - ER Line Distance</div>
<div class="a" style="left:364px;top:115px;width:1px;height:23px;background:#3F3F46"></div>
<div class="a" style="left:365px;top:119px;width:14px;height:14px;background:#333337;box-shadow:inset 0 0 0 1px #3F3F46"></div>
<svg width="14" height="14" style="position:absolute;left:365px;top:119px"><path d="M3.1 6.4L6.1 10L10.9 3.6" stroke="#F1F1F1" stroke-width="1.7" fill="none"/></svg>
<div class="t" style="left:383px;top:120px;color:#F1F1F1;letter-spacing:0px;transform:scaleX(0.8454);transform-origin:0 0;">Base</div>
<div class="a" style="left:414px;top:115px;width:1px;height:23px;background:#3F3F46"></div>
<div class="a" style="left:415px;top:119px;width:14px;height:14px;background:#333337;box-shadow:inset 0 0 0 1px #3F3F46"></div>
<svg width="14" height="14" style="position:absolute;left:415px;top:119px"><path d="M3.1 6.4L6.1 10L10.9 3.6" stroke="#F1F1F1" stroke-width="1.7" fill="none"/></svg>
<div class="t" style="left:433px;top:120px;color:#F1F1F1;letter-spacing:0.165px">Alt</div>
<div class="a" style="left:9px;top:149px;width:11px;height:1px;background:#3F3F46"></div>
<div class="a" style="left:23px;top:143px;width:14px;height:14px;background:#333337;box-shadow:inset 0 0 0 1px #3F3F46"></div>
<div class="a" style="left:39px;top:138px;width:1px;height:23px;background:#3F3F46"></div>
<div class="a" style="left:39px;top:160px;width:426px;height:1px;background:#3F3F46"></div>
<div class="t" style="left:44px;top:143px;color:#F1F1F1;width:317px;white-space:nowrap;overflow:hidden;letter-spacing:-0.184px">HDFX Index for Mapped Points - FE Line Distance</div>
<div class="a" style="left:364px;top:138px;width:1px;height:23px;background:#3F3F46"></div>
<div class="a" style="left:365px;top:142px;width:14px;height:14px;background:#333337;box-shadow:inset 0 0 0 1px #3F3F46"></div>
<svg width="14" height="14" style="position:absolute;left:365px;top:142px"><path d="M3.1 6.4L6.1 10L10.9 3.6" stroke="#F1F1F1" stroke-width="1.7" fill="none"/></svg>
<div class="t" style="left:383px;top:143px;color:#F1F1F1;letter-spacing:0px;transform:scaleX(0.8454);transform-origin:0 0;">Base</div>
<div class="a" style="left:414px;top:138px;width:1px;height:23px;background:#3F3F46"></div>
<div class="a" style="left:415px;top:142px;width:14px;height:14px;background:#333337;box-shadow:inset 0 0 0 1px #3F3F46"></div>
<svg width="14" height="14" style="position:absolute;left:415px;top:142px"><path d="M3.1 6.4L6.1 10L10.9 3.6" stroke="#F1F1F1" stroke-width="1.7" fill="none"/></svg>
<div class="t" style="left:433px;top:143px;color:#F1F1F1;letter-spacing:0.165px">Alt</div>
<div class="a" style="left:9px;top:172px;width:11px;height:1px;background:#3F3F46"></div>
<div class="a" style="left:23px;top:166px;width:14px;height:14px;background:#333337;box-shadow:inset 0 0 0 1px #3F3F46"></div>
<div class="a" style="left:39px;top:161px;width:1px;height:23px;background:#3F3F46"></div>
<div class="a" style="left:39px;top:183px;width:426px;height:1px;background:#3F3F46"></div>
<div class="t" style="left:44px;top:166px;color:#F1F1F1;width:317px;white-space:nowrap;overflow:hidden;letter-spacing:-0.12px">HDFX Index for Mapped Points - Manual Launch Line Dist...</div>
<div class="a" style="left:364px;top:161px;width:1px;height:23px;background:#3F3F46"></div>
<div class="a" style="left:365px;top:165px;width:14px;height:14px;background:#333337;box-shadow:inset 0 0 0 1px #3F3F46"></div>
<svg width="14" height="14" style="position:absolute;left:365px;top:165px"><path d="M3.1 6.4L6.1 10L10.9 3.6" stroke="#F1F1F1" stroke-width="1.7" fill="none"/></svg>
<div class="t" style="left:383px;top:166px;color:#F1F1F1;letter-spacing:0px;transform:scaleX(0.8454);transform-origin:0 0;">Base</div>
<div class="a" style="left:414px;top:161px;width:1px;height:23px;background:#3F3F46"></div>
<div class="a" style="left:415px;top:165px;width:14px;height:14px;background:#333337;box-shadow:inset 0 0 0 1px #3F3F46"></div>
<svg width="14" height="14" style="position:absolute;left:415px;top:165px"><path d="M3.1 6.4L6.1 10L10.9 3.6" stroke="#F1F1F1" stroke-width="1.7" fill="none"/></svg>
<div class="t" style="left:433px;top:166px;color:#F1F1F1;letter-spacing:0.165px">Alt</div>
<div class="a" style="left:9px;top:11px;width:1px;height:165px;background:#3F3F46"></div>
</div>
<div class="a" style="left:1703px;top:484px;width:16px;height:176px;background:#333337;"></div>
<div class="a" style="left:1702px;top:484px;width:1px;height:176px;background:#3F3F46;"></div>
<svg width="8" height="4" style="position:absolute;left:1707px;top:490px"><path d="M0 4H8L4 0Z" fill="#9A9A9A"/></svg>
<svg width="8" height="4" style="position:absolute;left:1707px;top:650px"><path d="M0 0H8L4 4Z" fill="#9A9A9A"/></svg>
<div class="a" style="left:1706px;top:501px;width:10px;height:30px;background:#686868;"></div>
<div class="a" style="left:1148px;top:693px;width:80px;height:22px;background:#333337;box-shadow:inset 0 0 0 1px #3F3F46;"></div>
<svg width="20" height="16" style="position:absolute;left:1178px;top:697px"><path d="M3.5 8.5H7.5M9.0 5L15.5 8.200000000000045L9.0 11.399999999999977" stroke="#F1F1F1" stroke-width="1.2" fill="none"/></svg>
<div class="a" style="left:1148px;top:715px;width:80px;height:22px;background:#333337;box-shadow:inset 0 0 0 1px #3F3F46;"></div>
<svg width="20" height="16" style="position:absolute;left:1178px;top:719px"><path d="M10.0 5L4.0 8.200000000000045L10.0 11.399999999999977M12.0 8.5H16.0" stroke="#F1F1F1" stroke-width="1.2" fill="none"/></svg>
<div class="a" style="left:1148px;top:745px;width:80px;height:22px;background:#333337;box-shadow:inset 0 0 0 1px #3F3F46;"></div>
<div class="t" style="left:1148px;width:80px;text-align:center;top:750px;color:#F1F1F1;letter-spacing:-0.241px;text-indent:0.241px;">Copy To</div>
<div class="a" style="left:1148px;top:775px;width:80px;height:22px;background:#333337;box-shadow:inset 0 0 0 1px #3F3F46;"></div>
<div class="t" style="left:1148px;width:80px;text-align:center;top:780px;color:#F1F1F1;letter-spacing:-0.18px;text-indent:0.18px;">Move To</div>
<div class="a" style="left:1148px;top:797px;width:80px;height:22px;background:#333337;box-shadow:inset 0 0 0 1px #3F3F46;"></div>
<div class="t" style="left:1153px;top:802px;color:#F1F1F1;letter-spacing:0px;transform:scaleX(0.9203);transform-origin:0 0;">Base Tune</div>
<svg width="8" height="4" style="position:absolute;left:1215px;top:806px"><path d="M0 0H8L4 4Z" fill="#F1F1F1"/></svg>
<div class="t" style="left:1240px;top:675px;color:#F1F1F1;letter-spacing:-0.336px;">Tune 4:</div>
<svg width="16" height="14" style="position:absolute;left:1285px;top:675px"><path d="M0 0H4.5L5.5 1H15V4H0Z" fill="#F0E000"/><path d="M0.5 3H15V4.6H1.2Z" fill="#7A7418"/><path d="M1.2 4.5H15.5V13H0L0.3 6Z" fill="#FFF000"/><path d="M1 12.4H15" stroke="#E8E040" stroke-width="0.8"/></svg>
<div class="t" style="left:1304px;top:675px;color:#F1F1F1;letter-spacing:-0.207px;">Load</div>
<svg width="16" height="14" style="position:absolute;left:1337px;top:675px"><path d="M0 0H4.5L5.5 1H15V4H0Z" fill="#F0E000"/><path d="M0.5 3H15V4.6H1.2Z" fill="#7A7418"/><path d="M1.2 4.5H15.5V13H0L0.3 6Z" fill="#FFF000"/><path d="M1 12.4H15" stroke="#E8E040" stroke-width="0.8"/><path d="M8 2.5V11.5M4 6.9H12" stroke="#FF6420" stroke-width="1.8"/></svg>
<div class="t" style="left:1356px;top:675px;color:#F1F1F1;letter-spacing:0.26px;">Append</div>
<svg width="16" height="16" style="position:absolute;left:1405px;top:673px"><rect x="0" y="0" width="16" height="16" fill="#FFF200"/><path d="M3.6 0V5.2M12.4 0V5.2" stroke="#3C4020" stroke-width="0.9"/><rect x="4" y="4.2" width="8" height="1.3" fill="#B8B030"/><ellipse cx="8" cy="10.3" rx="2" ry="2.4" fill="#1E1E22"/></svg>
<div class="t" style="left:1424px;top:675px;color:#F1F1F1;letter-spacing:0px;transform:scaleX(0.8671);transform-origin:0 0;">Save</div>
<div class="t" style="left:1456px;top:675px;color:#F1F1F1;letter-spacing:-0.48px;">Values</div>
<div class="a" style="left:1493px;top:674px;width:14px;height:14px;background:#333337;box-shadow:inset 0 0 0 1px #3F3F46;"></div>
<div class="a" style="left:1511px;top:669px;width:51px;height:22px;background:#333337;box-shadow:inset 0 0 0 1px #3F3F46;"></div>
<div class="t" style="left:1516px;top:675px;color:#F1F1F1;letter-spacing:-0.171px;">Both</div>
<svg width="8" height="4" style="position:absolute;left:1550px;top:678px"><path d="M0 0H8L4 4Z" fill="#F1F1F1"/></svg>
<div class="a" style="left:1562px;top:669px;width:56px;height:24px;background:#333337;box-shadow:inset 0 0 0 1px #3F3F46;"></div>
<div class="t" style="left:1562px;width:56px;text-align:center;top:674px;color:#F1F1F1;letter-spacing:0px;text-indent:0px;transform:scaleX(0.9254);transform-origin:50% 0;">Check</div>
<div class="a" style="left:1618px;top:669px;width:71px;height:24px;background:#333337;box-shadow:inset 0 0 0 1px #3F3F46;"></div>
<div class="t" style="left:1618px;width:71px;text-align:center;top:674px;color:#F1F1F1;letter-spacing:0px;text-indent:0px;transform:scaleX(0.9314);transform-origin:50% 0;">UnCheck</div>
<div class="a" style="left:1236px;top:693px;width:483px;height:178px;background:#252526;box-shadow:inset 0 0 0 1px #3F3F46;"></div>
<div class="a" style="left:1237px;top:694px;width:465px;height:176px;overflow:hidden">
<div class="a" style="left:9px;top:11px;width:11px;height:1px;background:#3F3F46"></div>
<div class="a" style="left:23px;top:5px;width:14px;height:14px;background:#333337;box-shadow:inset 0 0 0 1px #3F3F46"></div>
<div class="a" style="left:39px;top:0px;width:1px;height:23px;background:#3F3F46"></div>
<div class="a" style="left:39px;top:22px;width:426px;height:1px;background:#3F3F46"></div>
<div class="t" style="left:44px;top:5px;color:#F1F1F1;width:317px;white-space:nowrap;overflow:hidden;letter-spacing:-0.121px">ETC Min Angle - Closed Loop Limit</div>
<div class="a" style="left:364px;top:0px;width:1px;height:23px;background:#3F3F46"></div>
<div class="a" style="left:365px;top:4px;width:14px;height:14px;background:#333337;box-shadow:inset 0 0 0 1px #3F3F46"></div>
<svg width="14" height="14" style="position:absolute;left:365px;top:4px"><path d="M3.1 6.4L6.1 10L10.9 3.6" stroke="#F1F1F1" stroke-width="1.7" fill="none"/></svg>
<div class="t" style="left:383px;top:5px;color:#F1F1F1;letter-spacing:0px;transform:scaleX(0.8454);transform-origin:0 0;">Base</div>
<div class="a" style="left:414px;top:0px;width:1px;height:23px;background:#3F3F46"></div>
<div class="a" style="left:415px;top:4px;width:14px;height:14px;background:#333337;box-shadow:inset 0 0 0 1px #3F3F46"></div>
<svg width="14" height="14" style="position:absolute;left:415px;top:4px"><path d="M3.1 6.4L6.1 10L10.9 3.6" stroke="#F1F1F1" stroke-width="1.7" fill="none"/></svg>
<div class="t" style="left:433px;top:5px;color:#F1F1F1;letter-spacing:0.165px">Alt</div>
<div class="a" style="left:9px;top:34px;width:11px;height:1px;background:#3F3F46"></div>
<div class="a" style="left:23px;top:28px;width:14px;height:14px;background:#333337;box-shadow:inset 0 0 0 1px #3F3F46"></div>
<div class="a" style="left:39px;top:23px;width:1px;height:23px;background:#3F3F46"></div>
<div class="a" style="left:39px;top:45px;width:426px;height:1px;background:#3F3F46"></div>
<div class="t" style="left:44px;top:28px;color:#F1F1F1;width:317px;white-space:nowrap;overflow:hidden;letter-spacing:-0.333px">Exhaust Cam Limit EOT (rpm, °F)</div>
<div class="a" style="left:364px;top:23px;width:1px;height:23px;background:#3F3F46"></div>
<div class="a" style="left:365px;top:27px;width:14px;height:14px;background:#333337;box-shadow:inset 0 0 0 1px #3F3F46"></div>
<svg width="14" height="14" style="position:absolute;left:365px;top:27px"><path d="M3.1 6.4L6.1 10L10.9 3.6" stroke="#F1F1F1" stroke-width="1.7" fill="none"/></svg>
<div class="t" style="left:383px;top:28px;color:#F1F1F1;letter-spacing:0px;transform:scaleX(0.8454);transform-origin:0 0;">Base</div>
<div class="a" style="left:414px;top:23px;width:1px;height:23px;background:#3F3F46"></div>
<div class="a" style="left:415px;top:27px;width:14px;height:14px;background:#333337;box-shadow:inset 0 0 0 1px #3F3F46"></div>
<svg width="14" height="14" style="position:absolute;left:415px;top:27px"><path d="M3.1 6.4L6.1 10L10.9 3.6" stroke="#F1F1F1" stroke-width="1.7" fill="none"/></svg>
<div class="t" style="left:433px;top:28px;color:#F1F1F1;letter-spacing:0.165px">Alt</div>
<div class="a" style="left:9px;top:57px;width:11px;height:1px;background:#3F3F46"></div>
<div class="a" style="left:23px;top:51px;width:14px;height:14px;background:#333337;box-shadow:inset 0 0 0 1px #3F3F46"></div>
<div class="a" style="left:39px;top:46px;width:1px;height:23px;background:#3F3F46"></div>
<div class="a" style="left:39px;top:68px;width:426px;height:1px;background:#3F3F46"></div>
<div class="t" style="left:44px;top:51px;color:#F1F1F1;width:317px;white-space:nowrap;overflow:hidden;letter-spacing:-0.281px">Exhaust Cam Limit MCT (rpm, °F)</div>
<div class="a" style="left:364px;top:46px;width:1px;height:23px;background:#3F3F46"></div>
<div class="a" style="left:365px;top:50px;width:14px;height:14px;background:#333337;box-shadow:inset 0 0 0 1px #3F3F46"></div>
<svg width="14" height="14" style="position:absolute;left:365px;top:50px"><path d="M3.1 6.4L6.1 10L10.9 3.6" stroke="#F1F1F1" stroke-width="1.7" fill="none"/></svg>
<div class="t" style="left:383px;top:51px;color:#F1F1F1;letter-spacing:0px;transform:scaleX(0.8454);transform-origin:0 0;">Base</div>
<div class="a" style="left:414px;top:46px;width:1px;height:23px;background:#3F3F46"></div>
<div class="a" style="left:415px;top:50px;width:14px;height:14px;background:#333337;box-shadow:inset 0 0 0 1px #3F3F46"></div>
<svg width="14" height="14" style="position:absolute;left:415px;top:50px"><path d="M3.1 6.4L6.1 10L10.9 3.6" stroke="#F1F1F1" stroke-width="1.7" fill="none"/></svg>
<div class="t" style="left:433px;top:51px;color:#F1F1F1;letter-spacing:0.165px">Alt</div>
<div class="a" style="left:9px;top:80px;width:11px;height:1px;background:#3F3F46"></div>
<div class="a" style="left:23px;top:74px;width:14px;height:14px;background:#333337;box-shadow:inset 0 0 0 1px #3F3F46"></div>
<div class="a" style="left:39px;top:69px;width:1px;height:23px;background:#3F3F46"></div>
<div class="a" style="left:39px;top:91px;width:426px;height:1px;background:#3F3F46"></div>
<div class="t" style="left:44px;top:74px;color:#F1F1F1;width:317px;white-space:nowrap;overflow:hidden;letter-spacing:-0.178px">Exhaust Cam Rate Limit for Desired Cam Position (°F, rpm)</div>
<div class="a" style="left:364px;top:69px;width:1px;height:23px;background:#3F3F46"></div>
<div class="a" style="left:365px;top:73px;width:14px;height:14px;background:#333337;box-shadow:inset 0 0 0 1px #3F3F46"></div>
<svg width="14" height="14" style="position:absolute;left:365px;top:73px"><path d="M3.1 6.4L6.1 10L10.9 3.6" stroke="#F1F1F1" stroke-width="1.7" fill="none"/></svg>
<div class="t" style="left:383px;top:74px;color:#F1F1F1;letter-spacing:0px;transform:scaleX(0.8454);transform-origin:0 0;">Base</div>
<div class="a" style="left:414px;top:69px;width:1px;height:23px;background:#3F3F46"></div>
<div class="a" style="left:415px;top:73px;width:14px;height:14px;background:#333337;box-shadow:inset 0 0 0 1px #3F3F46"></div>
<svg width="14" height="14" style="position:absolute;left:415px;top:73px"><path d="M3.1 6.4L6.1 10L10.9 3.6" stroke="#F1F1F1" stroke-width="1.7" fill="none"/></svg>
<div class="t" style="left:433px;top:74px;color:#F1F1F1;letter-spacing:0.165px">Alt</div>
<div class="a" style="left:9px;top:103px;width:11px;height:1px;background:#3F3F46"></div>
<div class="a" style="left:23px;top:97px;width:14px;height:14px;background:#333337;box-shadow:inset 0 0 0 1px #3F3F46"></div>
<div class="a" style="left:39px;top:92px;width:1px;height:23px;background:#3F3F46"></div>
<div class="a" style="left:39px;top:114px;width:426px;height:1px;background:#3F3F46"></div>
<div class="t" style="left:44px;top:97px;color:#F1F1F1;width:317px;white-space:nowrap;overflow:hidden;letter-spacing:-0.144px">Exhaust Valve Closing Optimal Power</div>
<div class="a" style="left:364px;top:92px;width:1px;height:23px;background:#3F3F46"></div>
<div class="a" style="left:365px;top:96px;width:14px;height:14px;background:#333337;box-shadow:inset 0 0 0 1px #3F3F46"></div>
<svg width="14" height="14" style="position:absolute;left:365px;top:96px"><path d="M3.1 6.4L6.1 10L10.9 3.6" stroke="#F1F1F1" stroke-width="1.7" fill="none"/></svg>
<div class="t" style="left:383px;top:97px;color:#F1F1F1;letter-spacing:0px;transform:scaleX(0.8454);transform-origin:0 0;">Base</div>
<div class="a" style="left:414px;top:92px;width:1px;height:23px;background:#3F3F46"></div>
<div class="a" style="left:415px;top:96px;width:14px;height:14px;background:#333337;box-shadow:inset 0 0 0 1px #3F3F46"></div>
<svg width="14" height="14" style="position:absolute;left:415px;top:96px"><path d="M3.1 6.4L6.1 10L10.9 3.6" stroke="#F1F1F1" stroke-width="1.7" fill="none"/></svg>
<div class="t" style="left:433px;top:97px;color:#F1F1F1;letter-spacing:0.165px">Alt</div>
<div class="a" style="left:9px;top:126px;width:11px;height:1px;background:#3F3F46"></div>
<div class="a" style="left:23px;top:120px;width:14px;height:14px;background:#333337;box-shadow:inset 0 0 0 1px #3F3F46"></div>
<div class="a" style="left:39px;top:115px;width:1px;height:23px;background:#3F3F46"></div>
<div class="a" style="left:39px;top:137px;width:426px;height:1px;background:#3F3F46"></div>
<div class="t" style="left:44px;top:120px;color:#F1F1F1;width:317px;white-space:nowrap;overflow:hidden;letter-spacing:-0.182px">HDFX Index for Mapped Points - ER Line Distance</div>
<div class="a" style="left:364px;top:115px;width:1px;height:23px;background:#3F3F46"></div>
<div class="a" style="left:365px;top:119px;width:14px;height:14px;background:#333337;box-shadow:inset 0 0 0 1px #3F3F46"></div>
<svg width="14" height="14" style="position:absolute;left:365px;top:119px"><path d="M3.1 6.4L6.1 10L10.9 3.6" stroke="#F1F1F1" stroke-width="1.7" fill="none"/></svg>
<div class="t" style="left:383px;top:120px;color:#F1F1F1;letter-spacing:0px;transform:scaleX(0.8454);transform-origin:0 0;">Base</div>
<div class="a" style="left:414px;top:115px;width:1px;height:23px;background:#3F3F46"></div>
<div class="a" style="left:415px;top:119px;width:14px;height:14px;background:#333337;box-shadow:inset 0 0 0 1px #3F3F46"></div>
<svg width="14" height="14" style="position:absolute;left:415px;top:119px"><path d="M3.1 6.4L6.1 10L10.9 3.6" stroke="#F1F1F1" stroke-width="1.7" fill="none"/></svg>
<div class="t" style="left:433px;top:120px;color:#F1F1F1;letter-spacing:0.165px">Alt</div>
<div class="a" style="left:9px;top:149px;width:11px;height:1px;background:#3F3F46"></div>
<div class="a" style="left:23px;top:143px;width:14px;height:14px;background:#333337;box-shadow:inset 0 0 0 1px #3F3F46"></div>
<div class="a" style="left:39px;top:138px;width:1px;height:23px;background:#3F3F46"></div>
<div class="a" style="left:39px;top:160px;width:426px;height:1px;background:#3F3F46"></div>
<div class="t" style="left:44px;top:143px;color:#F1F1F1;width:317px;white-space:nowrap;overflow:hidden;letter-spacing:-0.184px">HDFX Index for Mapped Points - FE Line Distance</div>
<div class="a" style="left:364px;top:138px;width:1px;height:23px;background:#3F3F46"></div>
<div class="a" style="left:365px;top:142px;width:14px;height:14px;background:#333337;box-shadow:inset 0 0 0 1px #3F3F46"></div>
<svg width="14" height="14" style="position:absolute;left:365px;top:142px"><path d="M3.1 6.4L6.1 10L10.9 3.6" stroke="#F1F1F1" stroke-width="1.7" fill="none"/></svg>
<div class="t" style="left:383px;top:143px;color:#F1F1F1;letter-spacing:0px;transform:scaleX(0.8454);transform-origin:0 0;">Base</div>
<div class="a" style="left:414px;top:138px;width:1px;height:23px;background:#3F3F46"></div>
<div class="a" style="left:415px;top:142px;width:14px;height:14px;background:#333337;box-shadow:inset 0 0 0 1px #3F3F46"></div>
<svg width="14" height="14" style="position:absolute;left:415px;top:142px"><path d="M3.1 6.4L6.1 10L10.9 3.6" stroke="#F1F1F1" stroke-width="1.7" fill="none"/></svg>
<div class="t" style="left:433px;top:143px;color:#F1F1F1;letter-spacing:0.165px">Alt</div>
<div class="a" style="left:9px;top:172px;width:11px;height:1px;background:#3F3F46"></div>
<div class="a" style="left:23px;top:166px;width:14px;height:14px;background:#333337;box-shadow:inset 0 0 0 1px #3F3F46"></div>
<div class="a" style="left:39px;top:161px;width:1px;height:23px;background:#3F3F46"></div>
<div class="a" style="left:39px;top:183px;width:426px;height:1px;background:#3F3F46"></div>
<div class="t" style="left:44px;top:166px;color:#F1F1F1;width:317px;white-space:nowrap;overflow:hidden;letter-spacing:-0.12px">HDFX Index for Mapped Points - Manual Launch Line Dist...</div>
<div class="a" style="left:364px;top:161px;width:1px;height:23px;background:#3F3F46"></div>
<div class="a" style="left:365px;top:165px;width:14px;height:14px;background:#333337;box-shadow:inset 0 0 0 1px #3F3F46"></div>
<svg width="14" height="14" style="position:absolute;left:365px;top:165px"><path d="M3.1 6.4L6.1 10L10.9 3.6" stroke="#F1F1F1" stroke-width="1.7" fill="none"/></svg>
<div class="t" style="left:383px;top:166px;color:#F1F1F1;letter-spacing:0px;transform:scaleX(0.8454);transform-origin:0 0;">Base</div>
<div class="a" style="left:414px;top:161px;width:1px;height:23px;background:#3F3F46"></div>
<div class="a" style="left:415px;top:165px;width:14px;height:14px;background:#333337;box-shadow:inset 0 0 0 1px #3F3F46"></div>
<svg width="14" height="14" style="position:absolute;left:415px;top:165px"><path d="M3.1 6.4L6.1 10L10.9 3.6" stroke="#F1F1F1" stroke-width="1.7" fill="none"/></svg>
<div class="t" style="left:433px;top:166px;color:#F1F1F1;letter-spacing:0.165px">Alt</div>
<div class="a" style="left:9px;top:11px;width:1px;height:165px;background:#3F3F46"></div>
</div>
<div class="a" style="left:1703px;top:694px;width:16px;height:176px;background:#333337;"></div>
<div class="a" style="left:1702px;top:694px;width:1px;height:176px;background:#3F3F46;"></div>
<svg width="8" height="4" style="position:absolute;left:1707px;top:700px"><path d="M0 4H8L4 0Z" fill="#9A9A9A"/></svg>
<svg width="8" height="4" style="position:absolute;left:1707px;top:860px"><path d="M0 0H8L4 4Z" fill="#9A9A9A"/></svg>
<div class="a" style="left:1706px;top:711px;width:10px;height:30px;background:#686868;"></div>
<div class="a" style="left:4px;top:879px;width:1715px;height:1px;background:#D8D8D8;"></div>
<div class="a" style="left:4px;top:880px;width:1708px;height:22px;background:#333337;box-shadow:inset 0 0 0 1px #3F3F46;"></div>
<div class="t" style="left:4px;width:1708px;text-align:center;top:885px;color:#F1F1F1;letter-spacing:-0.3px;text-indent:0.3px;font-weight:bold;">Build and Save Custom OS</div>
</div></body></html>
